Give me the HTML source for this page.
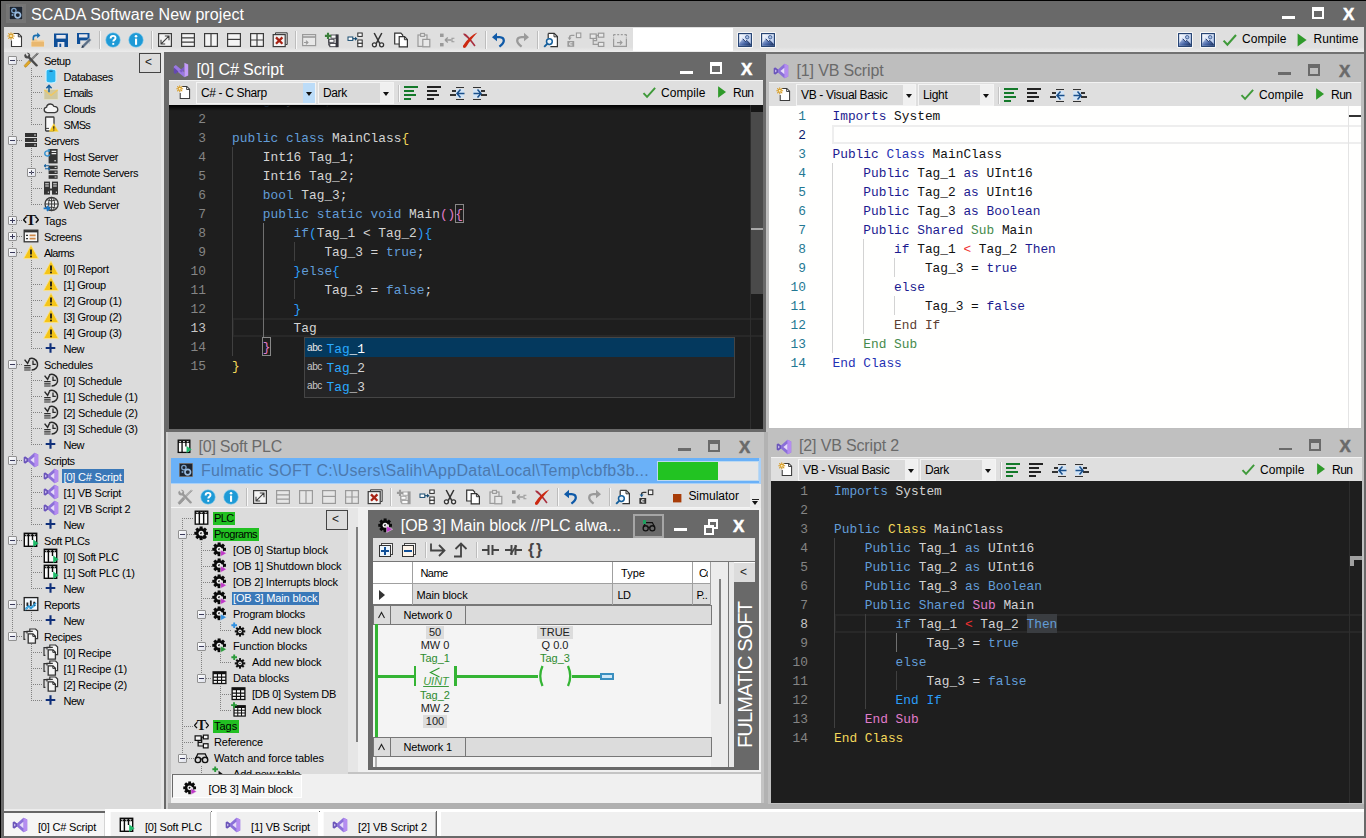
<!DOCTYPE html>
<html><head><meta charset="utf-8"><title>SCADA Software New project</title>
<style>
html,body{margin:0;padding:0}body{width:1366px;height:838px;overflow:hidden;position:relative;background:#696969;font-family:"Liberation Sans",sans-serif;}
body div,body span,body svg{position:absolute;}span{white-space:pre;}

.cd{font-family:"Liberation Mono",monospace;font-size:12.83px;line-height:19px;height:19px}
.cd b{font-weight:normal}
.dk{color:#d4d4d4}.dk .k{color:#629dd8}.dk .y{color:#f4d85a}.dk .p{color:#e07cca}.dk .b{color:#2b9df8}.dk .r{color:#f03030}.dk .hl{color:#2aaaff}.dk .w{color:#fff}
.dk.ln{color:#858585}.dk.lna{color:#c6c6c6}
.lt{color:#111}.lt .k{color:#1b1b90}.lt .y{color:#1f32b4}.lt .p{color:#468a4c}.lt .b{color:#5c3f34}.lt .r{color:#f03030}
.lt.ln{color:#237893}.lt.lna{color:#0b216f}

</style></head><body>
<svg width="0" height="0" style="left:0;top:0"><defs><linearGradient id="gsky" x1="0" y1="0" x2="1" y2="1"><stop offset="0" stop-color="#ffffff"/><stop offset="1" stop-color="#a8c0ee"/></linearGradient><linearGradient id="gmnt" x1="0" y1="0" x2="1" y2="1"><stop offset="0" stop-color="#c4d4f4"/><stop offset=".550" stop-color="#4a68a8"/><stop offset="1" stop-color="#142a58"/></linearGradient></defs></svg>
<div style="left:0px;top:0px;width:1366px;height:838px;background:#696969;"></div>
<div style="left:0px;top:0px;width:1366px;height:1px;background:#000;"></div>
<div style="left:0px;top:0px;width:1px;height:838px;background:#000;"></div>
<div style="left:6px;top:4px;width:20px;height:19px;background:#747474;"></div>
<svg style="left:9px;top:6px;" width="14" height="14" viewBox="0 0 16 16"><rect x="0" y="0" width="16" height="16" fill="#1c2430"/><rect x="0" y="0" width="16" height="16" fill="none" stroke="#8a8a8a" stroke-width="1.600"/><circle cx="5.600" cy="5.200" r="2.500" fill="none" stroke="#7aa0c8" stroke-width="1.500"/><circle cx="10" cy="10.400" r="3.200" fill="none" stroke="#9abce0" stroke-width="1.900"/><circle cx="4" cy="10.200" r="1.200" fill="#7aa0c8"/></svg>
<span style="left:31px;top:5.82px;font-size:16px;line-height:17.87px;color:#fff;letter-spacing:0.087px;">SCADA Software New project</span>
<div style="left:1282px;top:16px;width:13px;height:2.6px;background:#fff;"></div>
<div style="left:1311.5px;top:6.5px;width:8px;height:6px;border:2.5px solid #fff;border-top-width:4.5px;border-bottom-width:2px"></div>
<span style="left:1343px;top:4.92px;font-size:17px;line-height:18.99px;color:#fff;font-weight:bold;-webkit-text-stroke:.5px #fff;">X</span>
<div style="left:4px;top:27px;width:1360px;height:25px;background:#dfdfdf;"></div>
<div style="left:4px;top:47px;width:1360px;height:5px;background:linear-gradient(#dfdfdf,#ececec)"></div>
<svg style="left:7px;top:32px;" width="16" height="16" viewBox="0 0 16 16"><path d="M6.5 1.5h5l3 3v10h-10v-6" fill="#fff" stroke="#3a3a3a" stroke-width="1.1"/><path d="M11.3 1.6v3.2h3.1" fill="none" stroke="#3a3a3a" stroke-width="1"/><g stroke="#d89a1e" stroke-width="1.1" stroke-linecap="round"><path d="M4 0.8v6.4M0.8 4h6.4M1.7 1.7l4.6 4.6M6.3 1.7l-4.6 4.6"/></g><circle cx="4" cy="4" r="1.1" fill="#fff2c0"/></svg>
<svg style="left:30px;top:32px;" width="16" height="16" viewBox="0 0 16 16"><path d="M1.5 7h5l1 1.2h6.5v6.3h-12.5z" fill="#f2c98c" stroke="#f8e0b8" stroke-width=".6"/><path d="M1.5 10h12.5v4.5h-12.5z" fill="#e9b870"/><path d="M3.3 8.2v-2.2q0-2.6 2.6-2.6h2.3" fill="none" stroke="#1a6fb0" stroke-width="1.6"/><path d="M7.2 0.6l3.2 2.8-3.2 2.8z" fill="#1a6fb0"/></svg>
<svg style="left:53px;top:32px;" width="16" height="16" viewBox="0 0 16 16"><path d="M1 1.5h14v13.5h-14z" fill="#0f4f98"/><rect x="3.3" y="3" width="9.4" height="3.6" fill="#e8e8ee"/><rect x="4.6" y="10" width="6.8" height="5" fill="#e8e8ee"/><rect x="6.4" y="11.6" width="1.8" height="3.4" fill="#0f4f98"/></svg>
<svg style="left:76px;top:32px;" width="16" height="16" viewBox="0 0 16 16"><path d="M1 1h12.5v11h-12.5z" fill="#0f4f98"/><rect x="3" y="2.3" width="8.5" height="3.2" fill="#e8e8ee"/><rect x="4.2" y="8.4" width="9.5" height="4" fill="#e1e1e1"/><path d="M6.2 13.2l7.2-7.2 2 2-7.2 7.2-2.8.8z" fill="#5a6e86" stroke="#e1e1e1" stroke-width=".5"/><path d="M6.2 13.2l2 2-2.8.8z" fill="#26384e"/></svg>
<div style="left:99px;top:31px;width:1px;height:18px;background:#bdbdbd;"></div>
<div style="left:100px;top:31px;width:1px;height:18px;background:#f8f8f8;"></div>
<svg style="left:105px;top:32px;" width="16" height="16" viewBox="0 0 16 16"><circle cx="8" cy="8" r="7.3" fill="#1e9ad6" stroke="#8fd0f0" stroke-width=".6"/><path d="M5.6 6.4q0-2.5 2.5-2.5 2.4 0 2.4 2.1 0 1.2-1.2 1.9-1 .6-1 1.7" fill="none" stroke="#fff" stroke-width="1.9"/><rect x="7.3" y="10.9" width="1.9" height="1.9" fill="#fff"/></svg>
<svg style="left:128px;top:32px;" width="16" height="16" viewBox="0 0 16 16"><circle cx="8" cy="8" r="7.3" fill="#1e9ad6" stroke="#8fd0f0" stroke-width=".6"/><rect x="7" y="6.6" width="2.1" height="6.2" fill="#fff"/><circle cx="8.05" cy="4.3" r="1.3" fill="#fff"/></svg>
<div style="left:151px;top:31px;width:1px;height:18px;background:#bdbdbd;"></div>
<div style="left:152px;top:31px;width:1px;height:18px;background:#f8f8f8;"></div>
<svg style="left:157px;top:32px;" width="16" height="16" viewBox="0 0 16 16"><rect x="1.6" y="1.6" width="12.8" height="12.8" fill="#f4f4f4" stroke="#3c3c3c" stroke-width="1.2"/><path d="M4.2 11.8l7.6-7.6M7.8 4h4.2v4.2M8.2 12h-4.2v-4.2" fill="none" stroke="#3c3c3c" stroke-width="1.1"/></svg>
<svg style="left:180px;top:32px;" width="16" height="16" viewBox="0 0 16 16"><rect x="1.6" y="1.6" width="12.8" height="12.8" fill="#f4f4f4" stroke="#3c3c3c" stroke-width="1.2"/><path d="M1.6 5.9h12.8M1.6 10.1h12.8" stroke="#3c3c3c" stroke-width="1.2"/></svg>
<svg style="left:203px;top:32px;" width="16" height="16" viewBox="0 0 16 16"><rect x="1.6" y="1.6" width="12.8" height="12.8" fill="#f4f4f4" stroke="#3c3c3c" stroke-width="1.2"/><path d="M8 1.6v12.8" stroke="#3c3c3c" stroke-width="1.2"/></svg>
<svg style="left:226px;top:32px;" width="16" height="16" viewBox="0 0 16 16"><rect x="1.6" y="1.6" width="12.8" height="12.8" fill="#f4f4f4" stroke="#3c3c3c" stroke-width="1.2"/><path d="M1.6 7.4h12.8" stroke="#3c3c3c" stroke-width="1.2"/></svg>
<svg style="left:249px;top:32px;" width="16" height="16" viewBox="0 0 16 16"><rect x="1.6" y="1.6" width="12.8" height="12.8" fill="#f4f4f4" stroke="#3c3c3c" stroke-width="1.2"/><path d="M8 1.6v12.8M1.6 8h12.8" stroke="#3c3c3c" stroke-width="1.2"/></svg>
<svg style="left:272px;top:32px;" width="16" height="16" viewBox="0 0 16 16"><path d="M3.5 2.5v-1.7h11.7v11.7h-1.7" fill="none" stroke="#3c3c3c" stroke-width="1"/><rect x="1.2" y="2.6" width="12" height="12" fill="#f4f4f4" stroke="#3c3c3c" stroke-width="1.2"/><path d="M4 5.4l6.4 6.4M10.4 5.4l-6.4 6.4" stroke="#a82214" stroke-width="2.3"/></svg>
<div style="left:295px;top:31px;width:1px;height:18px;background:#bdbdbd;"></div>
<div style="left:296px;top:31px;width:1px;height:18px;background:#f8f8f8;"></div>
<svg style="left:301px;top:32px;" width="16" height="16" viewBox="0 0 16 16"><rect x="1.6" y="2.6" width="13" height="11" fill="#e8e8e8" stroke="#9a9a9a" stroke-width="1.2"/><path d="M1.6 5h13" stroke="#9a9a9a" stroke-width="1.6"/><path d="M3 10.5h3.4M5 8.6l1.9 1.9-1.9 1.9" fill="none" stroke="#9a9a9a" stroke-width="1.2"/></svg>
<svg style="left:324px;top:32px;" width="16" height="16" viewBox="0 0 16 16"><rect x="11.800" y="2.400" width="2.800" height="12.800" fill="#34343c"/><rect x="7" y="3" width="5" height="3.200" fill="#fafafa" stroke="#34343c" stroke-width=".800"/><rect x="4.800" y="7.300" width="5.200" height="3" fill="#fafafa" stroke="#34343c" stroke-width=".800"/><rect x="5.800" y="11.400" width="6.200" height="3.300" fill="#fafafa" stroke="#34343c" stroke-width=".900"/><path d="M4.800 7.300v6h1" fill="none" stroke="#34343c" stroke-width="1"/><path d="M4 .800v6.200M.900 3.900h6.200" stroke="#3a7f3a" stroke-width="2.100"/></svg>
<svg style="left:347px;top:32px;" width="16" height="16" viewBox="0 0 16 16"><rect x="1" y="5" width="4.800" height="3.400" fill="#fff" stroke="#14496e" stroke-width="1"/><path d="M5.800 6.700h3" stroke="#14496e" stroke-width="1.200"/><path d="M8 4.700l2.600 2-2.600 2z" fill="#14496e"/><rect x="10.800" y="1" width="4.400" height="3.400" fill="#fff" stroke="#2a2a2a" stroke-width="1"/><rect x="10.800" y="8" width="4.400" height="3.300" fill="#fff" stroke="#2a2a2a" stroke-width="1"/><rect x="10.800" y="11.300" width="4.400" height="3.400" fill="#fff" stroke="#2a2a2a" stroke-width="1"/></svg>
<svg style="left:370px;top:32px;" width="16" height="16" viewBox="0 0 16 16"><path d="M4.2 1l5.6 10.6M11.8 1l-5.6 10.6" stroke="#333" stroke-width="1.5" fill="none"/><circle cx="4.4" cy="12.8" r="2" fill="#f4f4f4" stroke="#333" stroke-width="1.3"/><circle cx="11.6" cy="12.8" r="2" fill="#f4f4f4" stroke="#333" stroke-width="1.3"/></svg>
<svg style="left:393px;top:32px;" width="16" height="16" viewBox="0 0 16 16"><path d="M1.7 1.2h6.2l1.8 1.8v9h-8z" fill="#fff" stroke="#333" stroke-width="1.2"/><path d="M6.2 4.7h5.4l2.8 2.8v7.3h-8.2z" fill="#fff" stroke="#333" stroke-width="1.2"/><path d="M11.4 4.9v2.8h2.8" fill="none" stroke="#333" stroke-width="1"/></svg>
<svg style="left:416px;top:32px;" width="16" height="16" viewBox="0 0 16 16"><rect x="2" y="3" width="9" height="11.4" fill="#e4e4e4" stroke="#9a9a9a" stroke-width="1.2"/><rect x="4.6" y="1.4" width="3.8" height="3" fill="#e4e4e4" stroke="#9a9a9a" stroke-width="1.1"/><rect x="6.8" y="7.4" width="7" height="7.4" fill="#e8e8e8" stroke="#9a9a9a" stroke-width="1.2"/></svg>
<svg style="left:439px;top:32px;" width="16" height="16" viewBox="0 0 16 16"><rect x="1" y="1.6" width="3.6" height="3.4" fill="#9a9a9a"/><rect x="1" y="11" width="3.6" height="3.4" fill="#9a9a9a"/><path d="M6 8h6.4M6 8l2.8-2.6M6 8l2.8 2.6" stroke="#9a9a9a" stroke-width="1.4" fill="none"/><path d="M15.4 6.2h-2.4v3.6h2.4" stroke="#9a9a9a" stroke-width="1.1" fill="none"/></svg>
<svg style="left:462px;top:32px;" width="16" height="16" viewBox="0 0 16 16"><path d="M1 1.800q1.400-.800 2.800.200 4.200 3.600 9.800 11.600l-1.300.900q-4.600-6.600-8.500-9.800-1.600-.900-2.800-2.900z" fill="#a83040"/><path d="M15.400.400q-3.400 1.400-7 4.600-5 4.400-7.400 8.800-.600 2 1.200 2.200 1.600-.200 2.400-1.800 2-3.600 4.800-6.800 3-3.800 6-7z" fill="#cc2810"/></svg>
<div style="left:485px;top:31px;width:1px;height:18px;background:#bdbdbd;"></div>
<div style="left:486px;top:31px;width:1px;height:18px;background:#f8f8f8;"></div>
<svg style="left:491px;top:32px;" width="16" height="16" viewBox="0 0 16 16"><path d="M4 5.2h4.6q4.2.2 4.2 3.6 0 2.6-4.4 5.8" fill="none" stroke="#0f5aa8" stroke-width="2.3"/><path d="M1 5.2l5-4.4v8.4z" fill="#0f5aa8"/></svg>
<svg style="left:514px;top:32px;" width="16" height="16" viewBox="0 0 16 16"><path d="M12 5.2h-4.6q-4.2.2-4.2 3.6 0 2.6 4.4 5.8" fill="none" stroke="#9a9a9a" stroke-width="2.3"/><path d="M15 5.2l-5-4.4v8.4z" fill="#9a9a9a"/></svg>
<div style="left:537px;top:31px;width:1px;height:18px;background:#bdbdbd;"></div>
<div style="left:538px;top:31px;width:1px;height:18px;background:#f8f8f8;"></div>
<svg style="left:543px;top:32px;" width="16" height="16" viewBox="0 0 16 16"><path d="M5.2 1.4h6l3.2 3.2v10h-7" fill="#fff" stroke="#333" stroke-width="1.2"/><path d="M11 1.6v3.2h3.2" fill="none" stroke="#333" stroke-width="1"/><path d="M5.2 1.4v5" stroke="#333" stroke-width="1.2"/><circle cx="6.4" cy="9.6" r="2.9" fill="#e8f2fa" stroke="#155f9c" stroke-width="1.5"/><path d="M4.2 11.8l-3 3" stroke="#155f9c" stroke-width="1.9"/></svg>
<svg style="left:566px;top:32px;" width="16" height="16" viewBox="0 0 16 16"><rect x="10.4" y="1" width="4.4" height="4.6" fill="#e8e8e8" stroke="#9a9a9a" stroke-width="1.1"/><rect x="1.4" y="9" width="6.8" height="5.8" fill="#9a9a9a"/><path d="M6.4 10.8h-2.6v2.2h2.6" fill="none" stroke="#e8e8e8" stroke-width="1"/><path d="M3.6 7.6v-2.4q0-1.8 2-1.8h2.8" fill="none" stroke="#9a9a9a" stroke-width="1.3"/><path d="M1.6 5.4l2 2.6 2-2.6z" fill="#9a9a9a"/></svg>
<svg style="left:589px;top:32px;" width="16" height="16" viewBox="0 0 16 16"><rect x="1.2" y="2" width="6" height="4.4" fill="#e8e8e8" stroke="#9a9a9a" stroke-width="1.2"/><rect x="9.4" y="1.2" width="5.4" height="4" fill="#e8e8e8" stroke="#9a9a9a" stroke-width="1.2"/><rect x="9.4" y="10.4" width="5.4" height="4" fill="#e8e8e8" stroke="#9a9a9a" stroke-width="1.2"/><path d="M4.2 6.4v6h5.2M4.2 8.6h3.4v-5.2h1.8" fill="none" stroke="#9a9a9a" stroke-width="1.2"/></svg>
<svg style="left:612px;top:32px;" width="16" height="16" viewBox="0 0 16 16"><path d="M1.6 7v7.4h12.8v-7.4" fill="none" stroke="#9a9a9a" stroke-width="1.2"/><path d="M1.6 2.6h12.8" stroke="#9a9a9a" stroke-width="1.2" stroke-dasharray="2 1.6"/><path d="M1.6 2.6v4M14.4 2.6v4" stroke="#9a9a9a" stroke-width="1.2" stroke-dasharray="1.6 1.4"/><path d="M5 10.6h4.6M8 8.6l2 2-2 2" fill="none" stroke="#9a9a9a" stroke-width="1.1"/></svg>
<div style="left:633px;top:28px;width:100px;height:23px;background:#fff;"></div>
<svg style="left:737px;top:32px;" width="16" height="16" viewBox="0 0 16 16"><rect x=".300" y=".300" width="15.400" height="15.400" fill="#fff"/><rect x="1.600" y="1.600" width="12.800" height="12.800" fill="url(#gsky)" stroke="#1f3d6e" stroke-width="1.100"/><path d="M2.200 13.800v-2.600l3.600-4.400 2.600 2.800 1.400-1.200 4 4.200v1.200z" fill="url(#gmnt)"/><path d="M5.800 6.800l2.600 2.800 1.400-1.200 4 4.200" fill="none" stroke="#1a2f5a" stroke-width=".900"/><circle cx="10.200" cy="5.200" r="1.700" fill="#a9c0e8" stroke="#3d5c8e" stroke-width=".900"/></svg>
<svg style="left:760px;top:32px;" width="16" height="16" viewBox="0 0 16 16"><rect x=".300" y=".300" width="15.400" height="15.400" fill="#fff"/><rect x="1.600" y="1.600" width="12.800" height="12.800" fill="url(#gsky)" stroke="#1f3d6e" stroke-width="1.100"/><path d="M2.200 13.800v-2.600l3.600-4.400 2.600 2.800 1.400-1.200 4 4.200v1.200z" fill="url(#gmnt)"/><path d="M5.800 6.800l2.600 2.800 1.400-1.200 4 4.200" fill="none" stroke="#1a2f5a" stroke-width=".900"/><circle cx="10.200" cy="5.200" r="1.700" fill="#a9c0e8" stroke="#3d5c8e" stroke-width=".900"/></svg>
<svg style="left:1177px;top:32px;" width="16" height="16" viewBox="0 0 16 16"><rect x=".300" y=".300" width="15.400" height="15.400" fill="#fff"/><rect x="1.600" y="1.600" width="12.800" height="12.800" fill="url(#gsky)" stroke="#1f3d6e" stroke-width="1.100"/><path d="M2.200 13.800v-2.600l3.600-4.400 2.600 2.800 1.400-1.200 4 4.200v1.200z" fill="url(#gmnt)"/><path d="M5.800 6.800l2.600 2.800 1.400-1.200 4 4.200" fill="none" stroke="#1a2f5a" stroke-width=".900"/><circle cx="10.200" cy="5.200" r="1.700" fill="#a9c0e8" stroke="#3d5c8e" stroke-width=".900"/></svg>
<svg style="left:1200px;top:32px;" width="16" height="16" viewBox="0 0 16 16"><rect x=".300" y=".300" width="15.400" height="15.400" fill="#fff"/><rect x="1.600" y="1.600" width="12.800" height="12.800" fill="url(#gsky)" stroke="#1f3d6e" stroke-width="1.100"/><path d="M2.200 13.800v-2.600l3.600-4.400 2.600 2.800 1.400-1.200 4 4.200v1.200z" fill="url(#gmnt)"/><path d="M5.800 6.800l2.600 2.800 1.400-1.200 4 4.200" fill="none" stroke="#1a2f5a" stroke-width=".900"/><circle cx="10.200" cy="5.200" r="1.700" fill="#a9c0e8" stroke="#3d5c8e" stroke-width=".900"/></svg>
<svg style="left:1222px;top:32px;" width="16" height="16" viewBox="0 0 16 16"><path d="M1.6 8.6l3.8 4 8.6-9.6" fill="none" stroke="#3f9a3a" stroke-width="2.1"/></svg>
<span style="left:1242px;top:33.14px;font-size:12px;line-height:13.40px;color:#000;letter-spacing:0.069px;">Compile</span>
<svg style="left:1294px;top:32px;" width="16" height="16" viewBox="0 0 16 16"><path d="M3.6 1.4l9 6.6-9 6.6z" fill="#2f9a2a"/></svg>
<span style="left:1313.5px;top:33.14px;font-size:12px;line-height:13.40px;color:#000;letter-spacing:0.045px;">Runtime</span>
<div style="left:4px;top:52px;width:157px;height:757px;background:#dcdcdc;"></div>
<div style="left:161px;top:52px;width:3px;height:757px;background:#e6e6e6;"></div>
<div style="left:139px;top:53px;width:20px;height:18px;border:1px solid #444;background:#dcdcdc"></div>
<span style="left:145px;top:56.14px;font-size:12px;line-height:13.40px;color:#222;">&lt;</span>
<div style="left:12px;top:60px;width:1px;height:576px;background:repeating-linear-gradient(180deg,#808080 0 1px,transparent 1px 2px)"></div>
<div style="left:17px;top:60px;width:6px;height:1px;background:repeating-linear-gradient(90deg,#808080 0 1px,transparent 1px 2px)"></div>
<div style="left:8px;top:56px;width:7px;height:7px;border:1px solid #919191;background:linear-gradient(135deg,#fff,#dde0ea);border-radius:1px"></div>
<div style="left:10px;top:60px;width:5px;height:1px;background:#3a3a5a;"></div>
<svg style="left:23px;top:52px;" width="16" height="16" viewBox="0 0 16 16"><path d="M13.8 1.2l1 1-7.6 8-1.4-1.4z" fill="#8a8a8a" stroke="#555" stroke-width=".5"/><path d="M14.6 .8l.6.6-2 2.2" stroke="#555" stroke-width=".8" fill="none"/><path d="M1.2 13.4l4.6-4.8 1.8 1.8-4.6 4.8q-1.4.4-1.8-1.8z" fill="#e0a828" stroke="#a87818" stroke-width=".5"/><path d="M2.2 1.4q-1.8 1.8-.4 4 1.600 1.400 3.200.8l8 8.200q1.400.6 2-1.200l-8-8.400q.8-2-.8-3.600-1.200-.8-2.400-.4l2 2-1.600 1.800z" fill="#4a4a4a"/></svg>
<span style="left:44px;top:54.84px;font-size:11px;line-height:12.29px;color:#000;letter-spacing:-0.470px;">Setup</span>
<div style="left:31px;top:76px;width:12px;height:1px;background:repeating-linear-gradient(90deg,#808080 0 1px,transparent 1px 2px)"></div>
<svg style="left:42.5px;top:68px;" width="16" height="16" viewBox="0 0 16 16"><path d="M3 3.200q0-2.200 5-2.200t5 2.200v9.600q0 2.200-5 2.200t-5-2.200z" fill="#2bb5f0" stroke="#c8f0ff" stroke-width="1.200"/><path d="M6.400 3.200h3.200" stroke="#0f5a8a" stroke-width="1.200"/></svg>
<span style="left:63.6px;top:70.84px;font-size:11px;line-height:12.29px;color:#000;letter-spacing:-0.355px;">Databases</span>
<div style="left:31px;top:92px;width:12px;height:1px;background:repeating-linear-gradient(90deg,#808080 0 1px,transparent 1px 2px)"></div>
<svg style="left:42.5px;top:84px;" width="16" height="16" viewBox="0 0 16 16"><rect x="1" y="5.400" width="14" height="10" fill="#cfc8a0" stroke="#e8e4c8" stroke-width=".6"/><path d="M1.400 6l6.600 5.400 6.600-5.400" fill="none" stroke="#f0c860" stroke-width="1.400"/><path d="M6 8.200v-6.400M3.400 4.200l2.600-2.800 2.600 2.800" fill="none" stroke="#155f9c" stroke-width="1.500"/></svg>
<span style="left:63.6px;top:86.84px;font-size:11px;line-height:12.29px;color:#000;letter-spacing:-0.736px;">Emails</span>
<div style="left:31px;top:108px;width:12px;height:1px;background:repeating-linear-gradient(90deg,#808080 0 1px,transparent 1px 2px)"></div>
<svg style="left:42.5px;top:100px;" width="16" height="16" viewBox="0 0 16 16"><path d="M4.200 12.600q-3-.2-3-2.800 0-2.200 2.400-2.600.4-3.200 3.800-3.200 2.600 0 3.600 2.400 3.800 0 3.800 3.200 0 2.800-3 3z" fill="#f4f4f4" stroke="#3a3a3a" stroke-width="1.300"/></svg>
<span style="left:63.6px;top:102.84px;font-size:11px;line-height:12.29px;color:#000;letter-spacing:-0.408px;">Clouds</span>
<div style="left:31px;top:124px;width:12px;height:1px;background:repeating-linear-gradient(90deg,#808080 0 1px,transparent 1px 2px)"></div>
<svg style="left:42.5px;top:116px;" width="16" height="16" viewBox="0 0 16 16"><rect x="2.600" y="1" width="8.400" height="14" rx=".8" fill="#f8f8f8" stroke="#3a3a3a" stroke-width="1.300"/><path d="M3 12.400h3" stroke="#3a3a3a" stroke-width="1"/><path d="M10.800 7.600l4.600 7.800h-9.200z" fill="#f5c518" stroke="#fbe27a" stroke-width=".5"/><path d="M10.800 10.200v2.600M10.800 13.600v1" stroke="#222" stroke-width="1.200"/></svg>
<span style="left:63.6px;top:118.85px;font-size:11px;line-height:12.29px;color:#000;letter-spacing:-0.686px;">SMSs</span>
<div style="left:17px;top:140px;width:6px;height:1px;background:repeating-linear-gradient(90deg,#808080 0 1px,transparent 1px 2px)"></div>
<div style="left:8px;top:136px;width:7px;height:7px;border:1px solid #919191;background:linear-gradient(135deg,#fff,#dde0ea);border-radius:1px"></div>
<div style="left:10px;top:140px;width:5px;height:1px;background:#3a3a5a;"></div>
<svg style="left:23px;top:132px;" width="16" height="16" viewBox="0 0 16 16"><rect x="2" y="1" width="12" height="4" fill="#333"/><rect x="2" y="6" width="12" height="4" fill="#333"/><rect x="2" y="11" width="12" height="4" fill="#333"/><path d="M11 3h2M11 8h2M11 13h2" stroke="#ddd" stroke-width="1"/></svg>
<span style="left:44px;top:134.84px;font-size:11px;line-height:12.29px;color:#000;letter-spacing:-0.444px;">Servers</span>
<div style="left:31px;top:156px;width:12px;height:1px;background:repeating-linear-gradient(90deg,#808080 0 1px,transparent 1px 2px)"></div>
<svg style="left:42.5px;top:148px;" width="16" height="16" viewBox="0 0 16 16"><rect x="5.600" y="1" width="9" height="14.400" fill="#333"/><path d="M8.600 3.400h4.600M8.600 5.600h4.600" stroke="#eee" stroke-width="1.100"/><rect x="11.400" y="12" width="1.400" height="1.400" fill="#ddd"/><path d="M6.200 3.600a2.600 2.600 0 1 0 .6 2.800" fill="none" stroke="#2f8fd0" stroke-width="1.400"/><path d="M4.400 1.400l2.600-.2-.4 2.800z" fill="#2f8fd0"/></svg>
<span style="left:63.6px;top:150.84px;font-size:11px;line-height:12.29px;color:#000;letter-spacing:-0.325px;">Host Server</span>
<div style="left:31px;top:172px;width:12px;height:1px;background:repeating-linear-gradient(90deg,#808080 0 1px,transparent 1px 2px)"></div>
<div style="left:27px;top:168px;width:7px;height:7px;border:1px solid #919191;background:linear-gradient(135deg,#fff,#dde0ea);border-radius:1px"></div>
<div style="left:29px;top:172px;width:5px;height:1px;background:#3a3a5a;"></div>
<div style="left:31px;top:170px;width:1px;height:5px;background:#3a3a5a;"></div>
<svg style="left:42.5px;top:164px;" width="16" height="16" viewBox="0 0 16 16"><rect x="5.600" y="1.600" width="9" height="3.600" fill="#333"/><rect x="5.600" y="6.400" width="9" height="3.600" fill="#333"/><rect x="5.600" y="11.200" width="9" height="3.600" fill="#333"/><path d="M11.600 3.400h2M11.600 8.200h2M11.600 13h2" stroke="#ddd" stroke-width="1"/><path d="M1.200 1.800h5M1.200 1.800l1.600-1.400M1.200 1.800l1.600 1.400M7 4.800h-5M7 4.800l-1.600-1.400M7 4.800l-1.600 1.400" stroke="#155f9c" stroke-width="1.100" fill="none"/></svg>
<span style="left:63.6px;top:166.84px;font-size:11px;line-height:12.29px;color:#000;letter-spacing:-0.356px;">Remote Servers</span>
<div style="left:31px;top:188px;width:12px;height:1px;background:repeating-linear-gradient(90deg,#808080 0 1px,transparent 1px 2px)"></div>
<svg style="left:42.5px;top:180px;" width="16" height="16" viewBox="0 0 16 16"><rect x="1" y="1.600" width="6" height="13" fill="#333"/><rect x="9" y="1.600" width="6" height="13" fill="#333"/><path d="M2.200 3.800h3.600M2.200 6h3.600M10.200 3.800h3.600M10.200 6h3.600" stroke="#eee" stroke-width="1"/><path d="M7 9.400h2" stroke="#333" stroke-width="2"/><rect x="4.800" y="11.600" width="1.200" height="1.200" fill="#ddd"/><rect x="12.800" y="11.600" width="1.200" height="1.200" fill="#ddd"/></svg>
<span style="left:63.6px;top:182.84px;font-size:11px;line-height:12.29px;color:#000;letter-spacing:-0.270px;">Redundant</span>
<div style="left:31px;top:204px;width:12px;height:1px;background:repeating-linear-gradient(90deg,#808080 0 1px,transparent 1px 2px)"></div>
<svg style="left:42.5px;top:196px;" width="16" height="16" viewBox="0 0 16 16"><circle cx="8.600" cy="8" r="6.600" fill="#f0f0f0" stroke="#3a3a3a" stroke-width="1.300"/><path d="M8.600 1.400v13.200M2 8h13.200M4 3.800q4.600 2.400 9.200 0M4 12.200q4.600-2.400 9.200 0" fill="none" stroke="#3a3a3a" stroke-width="1"/><ellipse cx="8.600" cy="8" rx="3" ry="6.600" fill="none" stroke="#3a3a3a" stroke-width="1"/><path d="M0.600 12.400h5.400M4 10l2.400 2.400-2.400 2.400" fill="none" stroke="#1a78c8" stroke-width="1.700"/></svg>
<span style="left:63.6px;top:198.84px;font-size:11px;line-height:12.29px;color:#000;letter-spacing:-0.188px;">Web Server</span>
<div style="left:17px;top:220px;width:6px;height:1px;background:repeating-linear-gradient(90deg,#808080 0 1px,transparent 1px 2px)"></div>
<div style="left:8px;top:216px;width:7px;height:7px;border:1px solid #919191;background:linear-gradient(135deg,#fff,#dde0ea);border-radius:1px"></div>
<div style="left:10px;top:220px;width:5px;height:1px;background:#3a3a5a;"></div>
<div style="left:12px;top:218px;width:1px;height:5px;background:#3a3a5a;"></div>
<svg style="left:23px;top:212px;" width="16" height="16" viewBox="0 0 16 16"><text x="8" y="13" font-family="Liberation Serif" font-weight="bold" font-size="15" text-anchor="middle" fill="#111">T</text><path d="M3.200 4.800l-2.600 3 2.600 3M12.800 4.800l2.600 3-2.600 3" fill="none" stroke="#111" stroke-width="1.400"/></svg>
<span style="left:44px;top:214.84px;font-size:11px;line-height:12.29px;color:#000;letter-spacing:-0.162px;">Tags</span>
<div style="left:17px;top:236px;width:6px;height:1px;background:repeating-linear-gradient(90deg,#808080 0 1px,transparent 1px 2px)"></div>
<div style="left:8px;top:232px;width:7px;height:7px;border:1px solid #919191;background:linear-gradient(135deg,#fff,#dde0ea);border-radius:1px"></div>
<div style="left:10px;top:236px;width:5px;height:1px;background:#3a3a5a;"></div>
<div style="left:12px;top:234px;width:1px;height:5px;background:#3a3a5a;"></div>
<svg style="left:23px;top:228px;" width="16" height="16" viewBox="0 0 16 16"><rect x="1.200" y="2.200" width="13.600" height="11.600" fill="#f8f8f8" stroke="#333" stroke-width="1.300"/><path d="M1.200 3.400h13.600" stroke="#333" stroke-width="2"/><path d="M3 7.400h2M3 10.600h2" stroke="#333" stroke-width="1.200"/><path d="M6.600 7.400h6M6.600 10.600h6" stroke="#d08a4a" stroke-width="1.800"/></svg>
<span style="left:44px;top:230.84px;font-size:11px;line-height:12.29px;color:#000;letter-spacing:-0.394px;">Screens</span>
<div style="left:17px;top:252px;width:6px;height:1px;background:repeating-linear-gradient(90deg,#808080 0 1px,transparent 1px 2px)"></div>
<div style="left:8px;top:248px;width:7px;height:7px;border:1px solid #919191;background:linear-gradient(135deg,#fff,#dde0ea);border-radius:1px"></div>
<div style="left:10px;top:252px;width:5px;height:1px;background:#3a3a5a;"></div>
<svg style="left:23px;top:244px;" width="16" height="16" viewBox="0 0 16 16"><path d="M8 1l7.400 13.600h-14.800z" fill="#f5c518" stroke="#fbe590" stroke-width=".8" stroke-linejoin="round"/><path d="M8 5.400v5.200" stroke="#1a1a1a" stroke-width="1.800"/><rect x="7.100" y="11.600" width="1.800" height="1.700" fill="#1a1a1a"/></svg>
<span style="left:44px;top:246.84px;font-size:11px;line-height:12.29px;color:#000;letter-spacing:-0.739px;">Alarms</span>
<div style="left:31px;top:268px;width:12px;height:1px;background:repeating-linear-gradient(90deg,#808080 0 1px,transparent 1px 2px)"></div>
<svg style="left:42.5px;top:260px;" width="16" height="16" viewBox="0 0 16 16"><path d="M8 1l7.400 13.600h-14.800z" fill="#f5c518" stroke="#fbe590" stroke-width=".8" stroke-linejoin="round"/><path d="M8 5.400v5.200" stroke="#1a1a1a" stroke-width="1.800"/><rect x="7.100" y="11.600" width="1.800" height="1.700" fill="#1a1a1a"/></svg>
<span style="left:63.6px;top:262.85px;font-size:11px;line-height:12.29px;color:#000;letter-spacing:-0.321px;">[0] Report</span>
<div style="left:31px;top:284px;width:12px;height:1px;background:repeating-linear-gradient(90deg,#808080 0 1px,transparent 1px 2px)"></div>
<svg style="left:42.5px;top:276px;" width="16" height="16" viewBox="0 0 16 16"><path d="M8 1l7.400 13.600h-14.800z" fill="#f5c518" stroke="#fbe590" stroke-width=".8" stroke-linejoin="round"/><path d="M8 5.400v5.200" stroke="#1a1a1a" stroke-width="1.800"/><rect x="7.100" y="11.600" width="1.800" height="1.700" fill="#1a1a1a"/></svg>
<span style="left:63.6px;top:278.85px;font-size:11px;line-height:12.29px;color:#000;letter-spacing:-0.418px;">[1] Group</span>
<div style="left:31px;top:300px;width:12px;height:1px;background:repeating-linear-gradient(90deg,#808080 0 1px,transparent 1px 2px)"></div>
<svg style="left:42.5px;top:292px;" width="16" height="16" viewBox="0 0 16 16"><path d="M8 1l7.400 13.600h-14.800z" fill="#f5c518" stroke="#fbe590" stroke-width=".8" stroke-linejoin="round"/><path d="M8 5.400v5.200" stroke="#1a1a1a" stroke-width="1.800"/><rect x="7.100" y="11.600" width="1.800" height="1.700" fill="#1a1a1a"/></svg>
<span style="left:63.6px;top:294.85px;font-size:11px;line-height:12.29px;color:#000;letter-spacing:-0.343px;">[2] Group (1)</span>
<div style="left:31px;top:316px;width:12px;height:1px;background:repeating-linear-gradient(90deg,#808080 0 1px,transparent 1px 2px)"></div>
<svg style="left:42.5px;top:308px;" width="16" height="16" viewBox="0 0 16 16"><path d="M8 1l7.400 13.600h-14.800z" fill="#f5c518" stroke="#fbe590" stroke-width=".8" stroke-linejoin="round"/><path d="M8 5.400v5.200" stroke="#1a1a1a" stroke-width="1.800"/><rect x="7.100" y="11.600" width="1.800" height="1.700" fill="#1a1a1a"/></svg>
<span style="left:63.6px;top:310.85px;font-size:11px;line-height:12.29px;color:#000;letter-spacing:-0.343px;">[3] Group (2)</span>
<div style="left:31px;top:332px;width:12px;height:1px;background:repeating-linear-gradient(90deg,#808080 0 1px,transparent 1px 2px)"></div>
<svg style="left:42.5px;top:324px;" width="16" height="16" viewBox="0 0 16 16"><path d="M8 1l7.400 13.600h-14.800z" fill="#f5c518" stroke="#fbe590" stroke-width=".8" stroke-linejoin="round"/><path d="M8 5.400v5.200" stroke="#1a1a1a" stroke-width="1.800"/><rect x="7.100" y="11.600" width="1.800" height="1.700" fill="#1a1a1a"/></svg>
<span style="left:63.6px;top:326.85px;font-size:11px;line-height:12.29px;color:#000;letter-spacing:-0.343px;">[4] Group (3)</span>
<div style="left:31px;top:348px;width:12px;height:1px;background:repeating-linear-gradient(90deg,#808080 0 1px,transparent 1px 2px)"></div>
<svg style="left:42.5px;top:340px;" width="16" height="16" viewBox="0 0 16 16"><path d="M7.500 3.200v9.600M2.700 8h9.600" stroke="#0f2f7a" stroke-width="2.100"/></svg>
<span style="left:63.6px;top:342.85px;font-size:11px;line-height:12.29px;color:#000;letter-spacing:-0.639px;">New</span>
<div style="left:17px;top:364px;width:6px;height:1px;background:repeating-linear-gradient(90deg,#808080 0 1px,transparent 1px 2px)"></div>
<div style="left:8px;top:360px;width:7px;height:7px;border:1px solid #919191;background:linear-gradient(135deg,#fff,#dde0ea);border-radius:1px"></div>
<div style="left:10px;top:364px;width:5px;height:1px;background:#3a3a5a;"></div>
<svg style="left:23px;top:356px;" width="16" height="16" viewBox="0 0 16 16"><path d="M6.200 3a5.800 5.800 0 1 1 2.400 11" fill="none" stroke="#2a2a2a" stroke-width="1.500"/><path d="M10 4.600v3.800h2.800" fill="none" stroke="#2a2a2a" stroke-width="1.300"/><path d="M1.600 3.600l3 3.800 2-4.200" fill="none" stroke="#2a2a2a" stroke-width="1.500"/><path d="M1.200 9.600h6.400M1.200 11.800h6.400M1.200 14h6.400" stroke="#2a2a2a" stroke-width="1.200"/></svg>
<span style="left:44px;top:358.85px;font-size:11px;line-height:12.29px;color:#000;letter-spacing:-0.308px;">Schedules</span>
<div style="left:31px;top:380px;width:12px;height:1px;background:repeating-linear-gradient(90deg,#808080 0 1px,transparent 1px 2px)"></div>
<svg style="left:42.5px;top:372px;" width="16" height="16" viewBox="0 0 16 16"><path d="M6.200 3a5.800 5.800 0 1 1 2.400 11" fill="none" stroke="#2a2a2a" stroke-width="1.500"/><path d="M10 4.600v3.800h2.800" fill="none" stroke="#2a2a2a" stroke-width="1.300"/><path d="M1.600 3.600l3 3.800 2-4.200" fill="none" stroke="#2a2a2a" stroke-width="1.500"/><path d="M1.200 9.600h6.400M1.200 11.800h6.400M1.200 14h6.400" stroke="#2a2a2a" stroke-width="1.200"/></svg>
<span style="left:63.6px;top:374.85px;font-size:11px;line-height:12.29px;color:#000;letter-spacing:-0.230px;">[0] Schedule</span>
<div style="left:31px;top:396px;width:12px;height:1px;background:repeating-linear-gradient(90deg,#808080 0 1px,transparent 1px 2px)"></div>
<svg style="left:42.5px;top:388px;" width="16" height="16" viewBox="0 0 16 16"><path d="M6.200 3a5.800 5.800 0 1 1 2.400 11" fill="none" stroke="#2a2a2a" stroke-width="1.500"/><path d="M10 4.600v3.800h2.800" fill="none" stroke="#2a2a2a" stroke-width="1.300"/><path d="M1.600 3.600l3 3.800 2-4.200" fill="none" stroke="#2a2a2a" stroke-width="1.500"/><path d="M1.200 9.600h6.400M1.200 11.800h6.400M1.200 14h6.400" stroke="#2a2a2a" stroke-width="1.200"/></svg>
<span style="left:63.6px;top:390.85px;font-size:11px;line-height:12.29px;color:#000;letter-spacing:-0.229px;">[1] Schedule (1)</span>
<div style="left:31px;top:412px;width:12px;height:1px;background:repeating-linear-gradient(90deg,#808080 0 1px,transparent 1px 2px)"></div>
<svg style="left:42.5px;top:404px;" width="16" height="16" viewBox="0 0 16 16"><path d="M6.200 3a5.800 5.800 0 1 1 2.400 11" fill="none" stroke="#2a2a2a" stroke-width="1.500"/><path d="M10 4.600v3.800h2.800" fill="none" stroke="#2a2a2a" stroke-width="1.300"/><path d="M1.600 3.600l3 3.800 2-4.200" fill="none" stroke="#2a2a2a" stroke-width="1.500"/><path d="M1.200 9.600h6.400M1.200 11.800h6.400M1.200 14h6.400" stroke="#2a2a2a" stroke-width="1.200"/></svg>
<span style="left:63.6px;top:406.85px;font-size:11px;line-height:12.29px;color:#000;letter-spacing:-0.229px;">[2] Schedule (2)</span>
<div style="left:31px;top:428px;width:12px;height:1px;background:repeating-linear-gradient(90deg,#808080 0 1px,transparent 1px 2px)"></div>
<svg style="left:42.5px;top:420px;" width="16" height="16" viewBox="0 0 16 16"><path d="M6.200 3a5.800 5.800 0 1 1 2.400 11" fill="none" stroke="#2a2a2a" stroke-width="1.500"/><path d="M10 4.600v3.800h2.800" fill="none" stroke="#2a2a2a" stroke-width="1.300"/><path d="M1.600 3.600l3 3.800 2-4.200" fill="none" stroke="#2a2a2a" stroke-width="1.500"/><path d="M1.200 9.600h6.400M1.200 11.800h6.400M1.200 14h6.400" stroke="#2a2a2a" stroke-width="1.200"/></svg>
<span style="left:63.6px;top:422.85px;font-size:11px;line-height:12.29px;color:#000;letter-spacing:-0.229px;">[3] Schedule (3)</span>
<div style="left:31px;top:444px;width:12px;height:1px;background:repeating-linear-gradient(90deg,#808080 0 1px,transparent 1px 2px)"></div>
<svg style="left:42.5px;top:436px;" width="16" height="16" viewBox="0 0 16 16"><path d="M7.500 3.200v9.600M2.700 8h9.600" stroke="#0f2f7a" stroke-width="2.100"/></svg>
<span style="left:63.6px;top:438.85px;font-size:11px;line-height:12.29px;color:#000;letter-spacing:-0.639px;">New</span>
<div style="left:17px;top:460px;width:6px;height:1px;background:repeating-linear-gradient(90deg,#808080 0 1px,transparent 1px 2px)"></div>
<div style="left:8px;top:456px;width:7px;height:7px;border:1px solid #919191;background:linear-gradient(135deg,#fff,#dde0ea);border-radius:1px"></div>
<div style="left:10px;top:460px;width:5px;height:1px;background:#3a3a5a;"></div>
<svg style="left:23px;top:452px;" width="16" height="16" viewBox="0 0 16 16"><path d="M11.400 .8l3.800 1.600v11.200l-3.800 1.600-6.400-5.800-2.800 2.200-1.400-.8v-5.600l1.400-.8 2.800 2.200z" fill="#8a6fd8"/><path d="M11.400 .8l3.800 1.600v11.200l-3.800 1.600z" fill="#b58cf0"/><path d="M11.400 4.800v6.400l-4-3.200z" fill="#e8dcfa"/><path d="M.8 5.200l1.400-.8 2.800 2.200v2.800l-2.800 2.200-1.400-.8z" fill="#6a55b8"/><path d="M2.200 6.400v3.200l1.600-1.600z" fill="#dcd0f4"/></svg>
<span style="left:44px;top:454.85px;font-size:11px;line-height:12.29px;color:#000;letter-spacing:-0.432px;">Scripts</span>
<div style="left:31px;top:476px;width:12px;height:1px;background:repeating-linear-gradient(90deg,#808080 0 1px,transparent 1px 2px)"></div>
<svg style="left:42.5px;top:468px;" width="16" height="16" viewBox="0 0 16 16"><path d="M11.400 .8l3.800 1.600v11.200l-3.800 1.600-6.400-5.800-2.800 2.200-1.400-.8v-5.600l1.400-.8 2.800 2.200z" fill="#8a6fd8"/><path d="M11.400 .8l3.800 1.600v11.200l-3.800 1.600z" fill="#b58cf0"/><path d="M11.400 4.800v6.400l-4-3.200z" fill="#e8dcfa"/><path d="M.8 5.200l1.400-.8 2.800 2.200v2.800l-2.800 2.200-1.400-.8z" fill="#6a55b8"/><path d="M2.200 6.400v3.200l1.600-1.600z" fill="#dcd0f4"/></svg>
<div style="left:62px;top:469px;width:61.9px;height:14px;background:#3a78b8;"></div>
<span style="left:63.6px;top:470.85px;font-size:11px;line-height:12.29px;color:#fff;letter-spacing:-0.202px;">[0] C# Script</span>
<div style="left:31px;top:492px;width:12px;height:1px;background:repeating-linear-gradient(90deg,#808080 0 1px,transparent 1px 2px)"></div>
<svg style="left:42.5px;top:484px;" width="16" height="16" viewBox="0 0 16 16"><path d="M11.400 .8l3.800 1.600v11.200l-3.800 1.600-6.400-5.800-2.800 2.200-1.400-.8v-5.600l1.400-.8 2.800 2.200z" fill="#8a6fd8"/><path d="M11.400 .8l3.800 1.600v11.200l-3.800 1.600z" fill="#b58cf0"/><path d="M11.400 4.800v6.400l-4-3.200z" fill="#e8dcfa"/><path d="M.8 5.200l1.400-.8 2.800 2.200v2.800l-2.800 2.200-1.400-.8z" fill="#6a55b8"/><path d="M2.200 6.400v3.200l1.600-1.600z" fill="#dcd0f4"/></svg>
<span style="left:63.6px;top:486.85px;font-size:11px;line-height:12.29px;color:#000;letter-spacing:-0.288px;">[1] VB Script</span>
<div style="left:31px;top:508px;width:12px;height:1px;background:repeating-linear-gradient(90deg,#808080 0 1px,transparent 1px 2px)"></div>
<svg style="left:42.5px;top:500px;" width="16" height="16" viewBox="0 0 16 16"><path d="M11.400 .8l3.800 1.600v11.200l-3.800 1.600-6.400-5.800-2.800 2.200-1.400-.8v-5.600l1.400-.8 2.800 2.200z" fill="#8a6fd8"/><path d="M11.400 .8l3.800 1.600v11.200l-3.800 1.600z" fill="#b58cf0"/><path d="M11.400 4.800v6.400l-4-3.200z" fill="#e8dcfa"/><path d="M.8 5.200l1.400-.8 2.800 2.200v2.800l-2.800 2.200-1.400-.8z" fill="#6a55b8"/><path d="M2.200 6.400v3.200l1.600-1.600z" fill="#dcd0f4"/></svg>
<span style="left:63.6px;top:502.84px;font-size:11px;line-height:12.29px;color:#000;letter-spacing:-0.227px;">[2] VB Script 2</span>
<div style="left:31px;top:524px;width:12px;height:1px;background:repeating-linear-gradient(90deg,#808080 0 1px,transparent 1px 2px)"></div>
<svg style="left:42.5px;top:516px;" width="16" height="16" viewBox="0 0 16 16"><path d="M7.500 3.200v9.600M2.700 8h9.600" stroke="#0f2f7a" stroke-width="2.100"/></svg>
<span style="left:63.6px;top:518.84px;font-size:11px;line-height:12.29px;color:#000;letter-spacing:-0.639px;">New</span>
<div style="left:17px;top:540px;width:6px;height:1px;background:repeating-linear-gradient(90deg,#808080 0 1px,transparent 1px 2px)"></div>
<div style="left:8px;top:536px;width:7px;height:7px;border:1px solid #919191;background:linear-gradient(135deg,#fff,#dde0ea);border-radius:1px"></div>
<div style="left:10px;top:540px;width:5px;height:1px;background:#3a3a5a;"></div>
<svg style="left:23px;top:532px;" width="16" height="16" viewBox="0 0 16 16"><rect x="1.300" y="1.300" width="12.400" height="13" fill="#fafafa" stroke="#0a0a0a" stroke-width="1.400"/><path d="M1.300 2.600h12.400" stroke="#0a0a0a" stroke-width="3.200"/><path d="M5.400 4v10.400M9.500 4v4" stroke="#0a0a0a" stroke-width="1.400"/><path d="M2.600 2l.8 1.400.8-1.400M6.600 2l.8 1.400.8-1.400M10.600 2l.8 1.400.8-1.400" fill="none" stroke="#fafafa" stroke-width=".9"/><path d="M10.200 7.400l5.400 3.800-5.400 3.800z" fill="#1fba6a"/></svg>
<span style="left:44px;top:534.84px;font-size:11px;line-height:12.29px;color:#000;letter-spacing:-0.437px;">Soft PLCs</span>
<div style="left:31px;top:556px;width:12px;height:1px;background:repeating-linear-gradient(90deg,#808080 0 1px,transparent 1px 2px)"></div>
<svg style="left:42.5px;top:548px;" width="16" height="16" viewBox="0 0 16 16"><rect x="1.300" y="1.300" width="12.400" height="13" fill="#fafafa" stroke="#0a0a0a" stroke-width="1.400"/><path d="M1.300 2.600h12.400" stroke="#0a0a0a" stroke-width="3.200"/><path d="M5.400 4v10.400M9.500 4v4" stroke="#0a0a0a" stroke-width="1.400"/><path d="M2.600 2l.8 1.400.8-1.400M6.600 2l.8 1.400.8-1.400M10.600 2l.8 1.400.8-1.400" fill="none" stroke="#fafafa" stroke-width=".9"/><path d="M10.200 7.400l5.400 3.800-5.400 3.800z" fill="#1fba6a"/></svg>
<span style="left:63.6px;top:550.84px;font-size:11px;line-height:12.29px;color:#000;letter-spacing:-0.326px;">[0] Soft PLC</span>
<div style="left:31px;top:572px;width:12px;height:1px;background:repeating-linear-gradient(90deg,#808080 0 1px,transparent 1px 2px)"></div>
<svg style="left:42.5px;top:564px;" width="16" height="16" viewBox="0 0 16 16"><rect x="1.300" y="1.300" width="12.400" height="13" fill="#fafafa" stroke="#0a0a0a" stroke-width="1.400"/><path d="M1.300 2.600h12.400" stroke="#0a0a0a" stroke-width="3.200"/><path d="M5.400 4v10.400M9.500 4v4" stroke="#0a0a0a" stroke-width="1.400"/><path d="M2.600 2l.8 1.400.8-1.400M6.600 2l.8 1.400.8-1.400M10.600 2l.8 1.400.8-1.400" fill="none" stroke="#fafafa" stroke-width=".9"/><path d="M10.200 7.400l5.400 3.800-5.400 3.800z" fill="#1fba6a"/></svg>
<span style="left:63.6px;top:566.84px;font-size:11px;line-height:12.29px;color:#000;letter-spacing:-0.301px;">[1] Soft PLC (1)</span>
<div style="left:31px;top:588px;width:12px;height:1px;background:repeating-linear-gradient(90deg,#808080 0 1px,transparent 1px 2px)"></div>
<svg style="left:42.5px;top:580px;" width="16" height="16" viewBox="0 0 16 16"><path d="M7.500 3.200v9.600M2.700 8h9.600" stroke="#0f2f7a" stroke-width="2.100"/></svg>
<span style="left:63.6px;top:582.84px;font-size:11px;line-height:12.29px;color:#000;letter-spacing:-0.639px;">New</span>
<div style="left:17px;top:604px;width:6px;height:1px;background:repeating-linear-gradient(90deg,#808080 0 1px,transparent 1px 2px)"></div>
<div style="left:8px;top:600px;width:7px;height:7px;border:1px solid #919191;background:linear-gradient(135deg,#fff,#dde0ea);border-radius:1px"></div>
<div style="left:10px;top:604px;width:5px;height:1px;background:#3a3a5a;"></div>
<svg style="left:23px;top:596px;" width="16" height="16" viewBox="0 0 16 16"><rect x="1.200" y="1.600" width="13.600" height="12.800" fill="#f4f8fc" stroke="#222" stroke-width="1.300"/><path d="M4.400 10v-3.600M7.800 10v-5.600M11.200 10v-4.200" stroke="#222" stroke-width="1.800"/><path d="M2.400 12.800l3.200-3 2.400 2 5-5" fill="none" stroke="#2f9ad8" stroke-width="1.500"/><path d="M2.400 14l3.200-2.400 2.400 1.200 5-3.800" fill="none" stroke="#2f9ad8" stroke-width="1"/></svg>
<span style="left:44px;top:598.84px;font-size:11px;line-height:12.29px;color:#000;letter-spacing:-0.419px;">Reports</span>
<div style="left:31px;top:620px;width:12px;height:1px;background:repeating-linear-gradient(90deg,#808080 0 1px,transparent 1px 2px)"></div>
<svg style="left:42.5px;top:612px;" width="16" height="16" viewBox="0 0 16 16"><path d="M7.500 3.200v9.600M2.700 8h9.600" stroke="#0f2f7a" stroke-width="2.100"/></svg>
<span style="left:63.6px;top:614.84px;font-size:11px;line-height:12.29px;color:#000;letter-spacing:-0.639px;">New</span>
<div style="left:17px;top:636px;width:6px;height:1px;background:repeating-linear-gradient(90deg,#808080 0 1px,transparent 1px 2px)"></div>
<div style="left:8px;top:632px;width:7px;height:7px;border:1px solid #919191;background:linear-gradient(135deg,#fff,#dde0ea);border-radius:1px"></div>
<div style="left:10px;top:636px;width:5px;height:1px;background:#3a3a5a;"></div>
<svg style="left:23px;top:628px;" width="16" height="16" viewBox="0 0 16 16"><path d="M6.800 3v-2h5.800l2 2v7.600h-2" fill="#f4f4f4" stroke="#333" stroke-width="1.200"/><path d="M4 5.400v-2h5.800M2.400 11.400h-1.400v-7.800h2.600" fill="none" stroke="#333" stroke-width="1.200"/><path d="M5.200 5.800h4.800l2.400 2.400v7h-7.200z" fill="#f4f4f4" stroke="#333" stroke-width="1.300"/><path d="M9.800 6v2.400h2.400" fill="none" stroke="#333" stroke-width="1"/></svg>
<span style="left:44px;top:630.84px;font-size:11px;line-height:12.29px;color:#000;letter-spacing:-0.307px;">Recipes</span>
<div style="left:31px;top:652px;width:12px;height:1px;background:repeating-linear-gradient(90deg,#808080 0 1px,transparent 1px 2px)"></div>
<svg style="left:42.5px;top:644px;" width="16" height="16" viewBox="0 0 16 16"><path d="M6.800 3v-2h5.800l2 2v7.600h-2" fill="#f4f4f4" stroke="#333" stroke-width="1.200"/><path d="M4 5.400v-2h5.800M2.400 11.400h-1.400v-7.800h2.600" fill="none" stroke="#333" stroke-width="1.200"/><path d="M5.200 5.800h4.800l2.400 2.400v7h-7.200z" fill="#f4f4f4" stroke="#333" stroke-width="1.300"/><path d="M9.800 6v2.400h2.400" fill="none" stroke="#333" stroke-width="1"/></svg>
<span style="left:63.6px;top:646.84px;font-size:11px;line-height:12.29px;color:#000;letter-spacing:-0.193px;">[0] Recipe</span>
<div style="left:31px;top:668px;width:12px;height:1px;background:repeating-linear-gradient(90deg,#808080 0 1px,transparent 1px 2px)"></div>
<svg style="left:42.5px;top:660px;" width="16" height="16" viewBox="0 0 16 16"><path d="M6.800 3v-2h5.800l2 2v7.600h-2" fill="#f4f4f4" stroke="#333" stroke-width="1.200"/><path d="M4 5.400v-2h5.800M2.400 11.400h-1.400v-7.800h2.600" fill="none" stroke="#333" stroke-width="1.200"/><path d="M5.200 5.800h4.800l2.400 2.400v7h-7.200z" fill="#f4f4f4" stroke="#333" stroke-width="1.300"/><path d="M9.800 6v2.400h2.400" fill="none" stroke="#333" stroke-width="1"/></svg>
<span style="left:63.6px;top:662.84px;font-size:11px;line-height:12.29px;color:#000;letter-spacing:-0.195px;">[1] Recipe (1)</span>
<div style="left:31px;top:684px;width:12px;height:1px;background:repeating-linear-gradient(90deg,#808080 0 1px,transparent 1px 2px)"></div>
<svg style="left:42.5px;top:676px;" width="16" height="16" viewBox="0 0 16 16"><path d="M6.800 3v-2h5.800l2 2v7.600h-2" fill="#f4f4f4" stroke="#333" stroke-width="1.200"/><path d="M4 5.400v-2h5.800M2.400 11.400h-1.400v-7.800h2.600" fill="none" stroke="#333" stroke-width="1.200"/><path d="M5.200 5.800h4.800l2.400 2.400v7h-7.200z" fill="#f4f4f4" stroke="#333" stroke-width="1.300"/><path d="M9.800 6v2.400h2.400" fill="none" stroke="#333" stroke-width="1"/></svg>
<span style="left:63.6px;top:678.84px;font-size:11px;line-height:12.29px;color:#000;letter-spacing:-0.195px;">[2] Recipe (2)</span>
<div style="left:31px;top:700px;width:12px;height:1px;background:repeating-linear-gradient(90deg,#808080 0 1px,transparent 1px 2px)"></div>
<svg style="left:42.5px;top:692px;" width="16" height="16" viewBox="0 0 16 16"><path d="M7.500 3.200v9.600M2.700 8h9.600" stroke="#0f2f7a" stroke-width="2.100"/></svg>
<span style="left:63.6px;top:694.84px;font-size:11px;line-height:12.29px;color:#000;letter-spacing:-0.639px;">New</span>
<div style="left:31px;top:68px;width:1px;height:57px;background:repeating-linear-gradient(180deg,#808080 0 1px,transparent 1px 2px)"></div>
<div style="left:31px;top:148px;width:1px;height:57px;background:repeating-linear-gradient(180deg,#808080 0 1px,transparent 1px 2px)"></div>
<div style="left:31px;top:260px;width:1px;height:89px;background:repeating-linear-gradient(180deg,#808080 0 1px,transparent 1px 2px)"></div>
<div style="left:31px;top:372px;width:1px;height:73px;background:repeating-linear-gradient(180deg,#808080 0 1px,transparent 1px 2px)"></div>
<div style="left:31px;top:468px;width:1px;height:57px;background:repeating-linear-gradient(180deg,#808080 0 1px,transparent 1px 2px)"></div>
<div style="left:31px;top:548px;width:1px;height:41px;background:repeating-linear-gradient(180deg,#808080 0 1px,transparent 1px 2px)"></div>
<div style="left:31px;top:612px;width:1px;height:9px;background:repeating-linear-gradient(180deg,#808080 0 1px,transparent 1px 2px)"></div>
<div style="left:31px;top:644px;width:1px;height:57px;background:repeating-linear-gradient(180deg,#808080 0 1px,transparent 1px 2px)"></div>
<div style="left:166px;top:53px;width:600px;height:379px;background:#696969;"></div>
<svg style="left:173px;top:61.5px;" width="16" height="16" viewBox="0 0 16 16"><path d="M.800 4.400l2-1.400 8.600 7.200v5l-10.600-8.400z" fill="#9a78e2"/><path d="M.800 5.400v5.600l1.600 1 3-2.600-3-2.600z" fill="#6448b0"/><path d="M11.400 4.600l-5 4.200 1.800 1.600 3.200-2.400z" fill="#7c5cc8"/><path d="M11.400.800l3.800 1.600v11.200l-3.800 1.600z" fill="#c39bf9"/></svg>
<span style="left:196.5px;top:60.72px;font-size:16px;line-height:17.87px;color:#fff;letter-spacing:-0.079px;">[0] C# Script</span>
<div style="left:680px;top:71px;width:13px;height:2.6px;background:#fff;"></div>
<div style="left:710px;top:62px;width:8px;height:6px;border:2.5px solid #fff;border-top-width:4.5px;border-bottom-width:2px"></div>
<span style="left:741px;top:59.62px;font-size:17px;line-height:18.99px;color:#fff;font-weight:bold;-webkit-text-stroke:.5px #fff;">X</span>
<div style="left:169px;top:80px;width:594px;height:25px;background:#dfdfdf;"></div>
<div style="left:169px;top:80px;width:594px;height:1px;background:#f2f2f2;"></div>
<svg style="left:176px;top:85px;" width="15" height="15" viewBox="0 0 16 16"><path d="M6.5 1.5h5l3 3v10h-10v-6" fill="#fff" stroke="#3a3a3a" stroke-width="1.1"/><path d="M11.3 1.6v3.2h3.1" fill="none" stroke="#3a3a3a" stroke-width="1"/><g stroke="#d89a1e" stroke-width="1.1" stroke-linecap="round"><path d="M4 0.8v6.4M0.8 4h6.4M1.7 1.7l4.6 4.6M6.3 1.7l-4.6 4.6"/></g><circle cx="4" cy="4" r="1.1" fill="#fff2c0"/></svg>
<div style="left:196px;top:82px;width:120px;height:22px;background:#f4f4f4;"></div>
<div style="left:197px;top:83px;width:106px;height:20px;background:#dadada;"></div>
<div style="left:303px;top:83px;width:12px;height:20px;background:#bcdcf8;"></div>
<span style="left:201px;top:86.64px;font-size:12px;line-height:13.40px;color:#000;letter-spacing:-0.350px;">C# - C Sharp</span>
<div style="left:306px;top:92px;border:3.5px solid transparent;border-top:4px solid #111;width:0;height:0"></div>
<div style="left:318px;top:82px;width:76px;height:22px;background:#f4f4f4;"></div>
<div style="left:319px;top:83px;width:61px;height:20px;background:#dadada;"></div>
<div style="left:380px;top:83px;width:13px;height:20px;background:#f0f0f0;"></div>
<span style="left:323px;top:86.64px;font-size:12px;line-height:13.40px;color:#000;letter-spacing:-0.380px;">Dark</span>
<div style="left:383px;top:92px;border:3.5px solid transparent;border-top:4px solid #111;width:0;height:0"></div>
<div style="left:398px;top:85px;width:1px;height:17px;background:#c4c4c4;"></div>
<div style="left:399px;top:85px;width:1px;height:17px;background:#fafafa;"></div>
<div style="left:404px;top:86px;width:14px;height:2px;background:#14792a;"></div>
<div style="left:427px;top:86px;width:14px;height:2px;background:#222;"></div>
<div style="left:404px;top:90px;width:10px;height:2px;background:#14792a;"></div>
<div style="left:427px;top:90px;width:10px;height:2px;background:#222;"></div>
<div style="left:404px;top:94px;width:12px;height:2px;background:#14792a;"></div>
<div style="left:427px;top:94px;width:12px;height:2px;background:#222;"></div>
<div style="left:404px;top:98px;width:7px;height:2px;background:#14792a;"></div>
<div style="left:427px;top:98px;width:7px;height:2px;background:#222;"></div>
<div style="left:456px;top:87px;width:8px;height:1px;background:#333;"></div>
<div style="left:456px;top:99px;width:8px;height:1px;background:#333;"></div>
<div style="left:452px;top:90px;width:4px;height:2px;background:#333;"></div>
<div style="left:450px;top:94px;width:6px;height:2px;background:#333;"></div>
<div style="left:456px;top:89px;width:8px;height:9px;background:#d2e4f6;"></div>
<svg style="left:456px;top:88px;" width="9" height="11" viewBox="0 0 9 11"><path d="M8.500 5.500h-7M4.500 1.500l-3.500 4 3.500 4" fill="none" stroke="#1a4f8a" stroke-width="1.500"/></svg>
<div style="left:473px;top:87px;width:8px;height:1px;background:#333;"></div>
<div style="left:473px;top:99px;width:8px;height:1px;background:#333;"></div>
<div style="left:481px;top:90px;width:4px;height:2px;background:#333;"></div>
<div style="left:481px;top:94px;width:6px;height:2px;background:#333;"></div>
<div style="left:473px;top:89px;width:8px;height:9px;background:#d2e4f6;"></div>
<svg style="left:473px;top:88px;" width="9" height="11" viewBox="0 0 9 11"><path d="M.500 5.500h7M4.500 1.500l3.500 4-3.500 4" fill="none" stroke="#1a4f8a" stroke-width="1.500"/></svg>
<svg style="left:642px;top:85px;" width="15" height="15" viewBox="0 0 16 16"><path d="M1.6 8.6l3.8 4 8.6-9.6" fill="none" stroke="#3f9a3a" stroke-width="2.1"/></svg>
<span style="left:661px;top:86.64px;font-size:12px;line-height:13.40px;color:#000;letter-spacing:0.069px;">Compile</span>
<svg style="left:715px;top:85px;" width="14" height="14" viewBox="0 0 16 16"><path d="M3.6 1.4l9 6.6-9 6.6z" fill="#2f9a2a"/></svg>
<span style="left:733px;top:86.64px;font-size:12px;line-height:13.40px;color:#000;letter-spacing:-0.505px;">Run</span>
<div style="left:169px;top:105px;width:594px;height:324px;background:#1e1e1e;"></div>
<div style="left:169px;top:105px;width:594px;height:324px;overflow:hidden">
<span class="cd dk" style="left:63px;top:-14px"><b class="k">using</b> System;</span>
<div style="left:63px;top:213px;width:531px;height:15px;border:2px solid #282828;border-right:0"></div>
<div style="left:63px;top:42px;width:1px;height:209px;background:#404040"></div>
<div style="left:94px;top:118px;width:1px;height:114px;background:#707070"></div>
<div style="left:125px;top:137px;width:1px;height:19px;background:#404040"></div>
<div style="left:125px;top:175px;width:1px;height:19px;background:#404040"></div>
<span class="cd dk ln" style="left:29.30px;top:5px">2</span>
<span class="cd dk ln" style="left:29.30px;top:24px">3</span>
<span class="cd dk ln" style="left:29.30px;top:43px">4</span>
<span class="cd dk ln" style="left:29.30px;top:62px">5</span>
<span class="cd dk ln" style="left:29.30px;top:81px">6</span>
<span class="cd dk ln" style="left:29.30px;top:100px">7</span>
<span class="cd dk ln" style="left:29.30px;top:119px">8</span>
<span class="cd dk ln" style="left:29.30px;top:138px">9</span>
<span class="cd dk ln" style="left:21.60px;top:157px">10</span>
<span class="cd dk ln" style="left:21.60px;top:176px">11</span>
<span class="cd dk ln" style="left:21.60px;top:195px">12</span>
<span class="cd dk ln lna" style="left:21.60px;top:214px">13</span>
<span class="cd dk ln" style="left:21.60px;top:233px">14</span>
<span class="cd dk ln" style="left:21.60px;top:252px">15</span>
<span class="cd dk" style="left:63px;top:24px"><b class="k">public</b> <b class="k">class</b> MainClass<b class="y">{</b></span>
<span class="cd dk" style="left:63px;top:43px">    Int16 Tag_1;</span>
<span class="cd dk" style="left:63px;top:62px">    Int16 Tag_2;</span>
<span class="cd dk" style="left:63px;top:81px">    <b class="k">bool</b> Tag_3;</span>
<span class="cd dk" style="left:63px;top:100px">    <b class="k">public</b> <b class="k">static</b> <b class="k">void</b> Main<b class="p">()</b><b class="p">{</b></span>
<span class="cd dk" style="left:63px;top:119px">        <b class="k">if</b><b class="b">(</b>Tag_1 &lt; Tag_2<b class="b">){</b></span>
<span class="cd dk" style="left:63px;top:138px">            Tag_3 = <b class="k">true</b>;</span>
<span class="cd dk" style="left:63px;top:157px">        <b class="b">}</b><b class="k">else</b><b class="b">{</b></span>
<span class="cd dk" style="left:63px;top:176px">            Tag_3 = <b class="k">false</b>;</span>
<span class="cd dk" style="left:63px;top:195px">        <b class="b">}</b></span>
<span class="cd dk" style="left:63px;top:214px">        Tag</span>
<span class="cd dk" style="left:63px;top:233px">    <b class="p">}</b></span>
<span class="cd dk" style="left:63px;top:252px"><b class="y">}</b></span>
<div style="left:285.7px;top:99px;width:7px;height:17px;border:1px solid #888"></div>
<div style="left:93.3px;top:232px;width:7px;height:17px;border:1px solid #888"></div>
<div style="left:0;top:0;width:594px;height:6px;background:linear-gradient(#000,rgba(0,0,0,0))"></div>
<div style="left:581px;top:0px;width:1px;height:324px;background:#2e2e2e;"></div>
<div style="left:582px;top:7px;width:12px;height:182px;background:#4a4a4a;"></div>
<div style="left:582px;top:122.5px;width:12px;height:2px;background:#a8a8a8;"></div>
<div style="left:582px;top:0px;width:12px;height:7px;background:#161616;"></div>
<div style="left:135px;top:232px;width:429px;height:59px;background:#252526;border:1px solid #454545"></div>
<div style="left:136px;top:233px;width:429px;height:19px;background:#04395e;"></div>
<span style="left:138px;top:237.45px;font-size:10px;line-height:11.17px;color:#e8e8e8;letter-spacing:-0.375px;">abc</span>
<span class="cd dk" style="left:157.5px;top:235px"><b class="hl">Tag</b><b class="w">_1</b></span>
<span style="left:138px;top:256.45px;font-size:10px;line-height:11.17px;color:#c8c8c8;letter-spacing:-0.375px;">abc</span>
<span class="cd dk" style="left:157.5px;top:254px"><b class="hl">Tag</b>_2</span>
<span style="left:138px;top:275.45px;font-size:10px;line-height:11.17px;color:#c8c8c8;letter-spacing:-0.375px;">abc</span>
<span class="cd dk" style="left:157.5px;top:273px"><b class="hl">Tag</b>_3</span>
</div>
<div style="left:766px;top:54px;width:598px;height:378px;background:#bebebe;"></div>
<div style="left:766px;top:52px;width:598px;height:2px;background:#727272;"></div>
<svg style="left:773px;top:63px;" width="16" height="16" viewBox="0 0 16 16"><path d="M11.400 .8l3.800 1.600v11.200l-3.800 1.600-6.400-5.800-2.800 2.200-1.400-.8v-5.600l1.400-.8 2.800 2.200z" fill="#8a6fd8"/><path d="M11.400 .8l3.800 1.600v11.200l-3.800 1.600z" fill="#b58cf0"/><path d="M11.400 4.800v6.400l-4-3.200z" fill="#e8dcfa"/><path d="M.8 5.200l1.400-.8 2.800 2.200v2.800l-2.800 2.200-1.400-.8z" fill="#6a55b8"/><path d="M2.200 6.400v3.200l1.600-1.600z" fill="#dcd0f4"/></svg>
<span style="left:796.5px;top:62.32px;font-size:16px;line-height:17.87px;color:#6a6a6a;letter-spacing:-0.148px;">[1] VB Script</span>
<div style="left:1278px;top:72px;width:13px;height:2.6px;background:#6a6a6a;"></div>
<div style="left:1308px;top:64px;width:8px;height:6px;border:2.5px solid #6a6a6a;border-top-width:4.5px;border-bottom-width:2px"></div>
<span style="left:1339px;top:61.62px;font-size:17px;line-height:18.99px;color:#6a6a6a;font-weight:bold;-webkit-text-stroke:.5px #6a6a6a;">X</span>
<div style="left:769px;top:82px;width:592px;height:25px;background:#dfdfdf;"></div>
<div style="left:769px;top:82px;width:592px;height:1px;background:#f2f2f2;"></div>
<svg style="left:776px;top:87px;" width="15" height="15" viewBox="0 0 16 16"><path d="M6.5 1.5h5l3 3v10h-10v-6" fill="#fff" stroke="#3a3a3a" stroke-width="1.1"/><path d="M11.3 1.6v3.2h3.1" fill="none" stroke="#3a3a3a" stroke-width="1"/><g stroke="#d89a1e" stroke-width="1.1" stroke-linecap="round"><path d="M4 0.8v6.4M0.8 4h6.4M1.7 1.7l4.6 4.6M6.3 1.7l-4.6 4.6"/></g><circle cx="4" cy="4" r="1.1" fill="#fff2c0"/></svg>
<div style="left:796px;top:84px;width:120px;height:22px;background:#f4f4f4;"></div>
<div style="left:797px;top:85px;width:106px;height:20px;background:#dadada;"></div>
<div style="left:903px;top:85px;width:12px;height:20px;background:#f0f0f0;"></div>
<span style="left:801px;top:88.64px;font-size:12px;line-height:13.40px;color:#000;letter-spacing:-0.324px;">VB - Visual Basic</span>
<div style="left:906px;top:94px;border:3.5px solid transparent;border-top:4px solid #111;width:0;height:0"></div>
<div style="left:918px;top:84px;width:76px;height:22px;background:#f4f4f4;"></div>
<div style="left:919px;top:85px;width:61px;height:20px;background:#dadada;"></div>
<div style="left:980px;top:85px;width:13px;height:20px;background:#f0f0f0;"></div>
<span style="left:923px;top:88.64px;font-size:12px;line-height:13.40px;color:#000;letter-spacing:-0.312px;">Light</span>
<div style="left:983px;top:94px;border:3.5px solid transparent;border-top:4px solid #111;width:0;height:0"></div>
<div style="left:998px;top:87px;width:1px;height:17px;background:#c4c4c4;"></div>
<div style="left:999px;top:87px;width:1px;height:17px;background:#fafafa;"></div>
<div style="left:1004px;top:88px;width:14px;height:2px;background:#14792a;"></div>
<div style="left:1027px;top:88px;width:14px;height:2px;background:#222;"></div>
<div style="left:1004px;top:92px;width:10px;height:2px;background:#14792a;"></div>
<div style="left:1027px;top:92px;width:10px;height:2px;background:#222;"></div>
<div style="left:1004px;top:96px;width:12px;height:2px;background:#14792a;"></div>
<div style="left:1027px;top:96px;width:12px;height:2px;background:#222;"></div>
<div style="left:1004px;top:100px;width:7px;height:2px;background:#14792a;"></div>
<div style="left:1027px;top:100px;width:7px;height:2px;background:#222;"></div>
<div style="left:1056px;top:89px;width:8px;height:1px;background:#333;"></div>
<div style="left:1056px;top:101px;width:8px;height:1px;background:#333;"></div>
<div style="left:1052px;top:92px;width:4px;height:2px;background:#333;"></div>
<div style="left:1050px;top:96px;width:6px;height:2px;background:#333;"></div>
<div style="left:1056px;top:91px;width:8px;height:9px;background:#d2e4f6;"></div>
<svg style="left:1056px;top:90px;" width="9" height="11" viewBox="0 0 9 11"><path d="M8.500 5.500h-7M4.500 1.500l-3.500 4 3.500 4" fill="none" stroke="#1a4f8a" stroke-width="1.500"/></svg>
<div style="left:1073px;top:89px;width:8px;height:1px;background:#333;"></div>
<div style="left:1073px;top:101px;width:8px;height:1px;background:#333;"></div>
<div style="left:1081px;top:92px;width:4px;height:2px;background:#333;"></div>
<div style="left:1081px;top:96px;width:6px;height:2px;background:#333;"></div>
<div style="left:1073px;top:91px;width:8px;height:9px;background:#d2e4f6;"></div>
<svg style="left:1073px;top:90px;" width="9" height="11" viewBox="0 0 9 11"><path d="M.500 5.500h7M4.500 1.500l3.500 4-3.500 4" fill="none" stroke="#1a4f8a" stroke-width="1.500"/></svg>
<svg style="left:1240px;top:87px;" width="15" height="15" viewBox="0 0 16 16"><path d="M1.6 8.6l3.8 4 8.6-9.6" fill="none" stroke="#3f9a3a" stroke-width="2.1"/></svg>
<span style="left:1259px;top:88.64px;font-size:12px;line-height:13.40px;color:#000;letter-spacing:0.069px;">Compile</span>
<svg style="left:1313px;top:87px;" width="14" height="14" viewBox="0 0 16 16"><path d="M3.6 1.4l9 6.6-9 6.6z" fill="#2f9a2a"/></svg>
<span style="left:1331px;top:88.64px;font-size:12px;line-height:13.40px;color:#000;letter-spacing:-0.505px;">Run</span>
<div style="left:769px;top:106px;width:592px;height:322px;background:#fffffe;"></div>
<div style="left:769px;top:106px;width:592px;height:322px;overflow:hidden">
<div style="left:63px;top:19px;width:529px;height:15px;border:2px solid #eeeeee;border-right:0"></div>
<div style="left:63px;top:57px;width:1px;height:190px;background:#d3d3d3"></div>
<div style="left:94px;top:133px;width:1px;height:95px;background:#d3d3d3"></div>
<div style="left:125px;top:152px;width:1px;height:19px;background:#d3d3d3"></div>
<div style="left:125px;top:190px;width:1px;height:19px;background:#d3d3d3"></div>
<span class="cd lt ln" style="left:29.30px;top:1px">1</span>
<span class="cd lt ln lna" style="left:29.30px;top:20px">2</span>
<span class="cd lt ln" style="left:29.30px;top:39px">3</span>
<span class="cd lt ln" style="left:29.30px;top:58px">4</span>
<span class="cd lt ln" style="left:29.30px;top:77px">5</span>
<span class="cd lt ln" style="left:29.30px;top:96px">6</span>
<span class="cd lt ln" style="left:29.30px;top:115px">7</span>
<span class="cd lt ln" style="left:29.30px;top:134px">8</span>
<span class="cd lt ln" style="left:29.30px;top:153px">9</span>
<span class="cd lt ln" style="left:21.60px;top:172px">10</span>
<span class="cd lt ln" style="left:21.60px;top:191px">11</span>
<span class="cd lt ln" style="left:21.60px;top:210px">12</span>
<span class="cd lt ln" style="left:21.60px;top:229px">13</span>
<span class="cd lt ln" style="left:21.60px;top:248px">14</span>
<span class="cd lt" style="left:63.5px;top:1px"><b class="k">Imports</b> System</span>
<span class="cd lt" style="left:63.5px;top:39px"><b class="k">Public</b> <b class="y">Class</b> MainClass</span>
<span class="cd lt" style="left:63.5px;top:58px">    <b class="k">Public</b> Tag_1 <b class="k">as</b> UInt16</span>
<span class="cd lt" style="left:63.5px;top:77px">    <b class="k">Public</b> Tag_2 <b class="k">as</b> UInt16</span>
<span class="cd lt" style="left:63.5px;top:96px">    <b class="k">Public</b> Tag_3 <b class="k">as</b> <b class="k">Boolean</b></span>
<span class="cd lt" style="left:63.5px;top:115px">    <b class="k">Public</b> <b class="k">Shared</b> <b class="p">Sub</b> Main</span>
<span class="cd lt" style="left:63.5px;top:134px">        <b class="k">if</b> Tag_1 <b class="r">&lt;</b> Tag_2 <b class="k">Then</b></span>
<span class="cd lt" style="left:63.5px;top:153px">            Tag_3 = <b class="k">true</b></span>
<span class="cd lt" style="left:63.5px;top:172px">        <b class="k">else</b></span>
<span class="cd lt" style="left:63.5px;top:191px">            Tag_3 = <b class="k">false</b></span>
<span class="cd lt" style="left:63.5px;top:210px">        <b class="b">End If</b></span>
<span class="cd lt" style="left:63.5px;top:229px">    <b class="p">End Sub</b></span>
<span class="cd lt" style="left:63.5px;top:248px"><b class="y">End Class</b></span>
<div style="left:579px;top:0px;width:1px;height:322px;background:#e4e4e4;"></div>
<div style="left:580px;top:9px;width:12px;height:2px;background:#333;"></div>
</div>
<div style="left:766px;top:429px;width:598px;height:380px;background:#c0c0c0;"></div>
<div style="left:766px;top:804px;width:598px;height:5px;background:#b0b0b0;"></div>
<svg style="left:776px;top:439px;" width="16" height="16" viewBox="0 0 16 16"><path d="M11.400 .8l3.800 1.600v11.200l-3.800 1.600-6.400-5.800-2.800 2.200-1.400-.8v-5.600l1.400-.8 2.800 2.200z" fill="#8a6fd8"/><path d="M11.400 .8l3.800 1.600v11.200l-3.800 1.600z" fill="#b58cf0"/><path d="M11.400 4.800v6.400l-4-3.200z" fill="#e8dcfa"/><path d="M.8 5.200l1.400-.8 2.800 2.200v2.800l-2.800 2.200-1.400-.8z" fill="#6a55b8"/><path d="M2.200 6.400v3.200l1.600-1.600z" fill="#dcd0f4"/></svg>
<span style="left:799px;top:437.32px;font-size:16px;line-height:17.87px;color:#6a6a6a;letter-spacing:-0.151px;">[2] VB Script 2</span>
<div style="left:1279px;top:447.5px;width:13px;height:2.6px;background:#6a6a6a;"></div>
<div style="left:1309px;top:439px;width:8px;height:6px;border:2.5px solid #6a6a6a;border-top-width:4.5px;border-bottom-width:2px"></div>
<span style="left:1339.5px;top:437.12px;font-size:17px;line-height:18.99px;color:#6a6a6a;font-weight:bold;-webkit-text-stroke:.5px #6a6a6a;">X</span>
<div style="left:771px;top:457px;width:591px;height:25px;background:#dfdfdf;"></div>
<div style="left:771px;top:457px;width:591px;height:1px;background:#f2f2f2;"></div>
<svg style="left:778px;top:462px;" width="15" height="15" viewBox="0 0 16 16"><path d="M6.5 1.5h5l3 3v10h-10v-6" fill="#fff" stroke="#3a3a3a" stroke-width="1.1"/><path d="M11.3 1.6v3.2h3.1" fill="none" stroke="#3a3a3a" stroke-width="1"/><g stroke="#d89a1e" stroke-width="1.1" stroke-linecap="round"><path d="M4 0.8v6.4M0.8 4h6.4M1.7 1.7l4.6 4.6M6.3 1.7l-4.6 4.6"/></g><circle cx="4" cy="4" r="1.1" fill="#fff2c0"/></svg>
<div style="left:798px;top:459px;width:120px;height:22px;background:#f4f4f4;"></div>
<div style="left:799px;top:460px;width:106px;height:20px;background:#dadada;"></div>
<div style="left:905px;top:460px;width:12px;height:20px;background:#f0f0f0;"></div>
<span style="left:803px;top:463.64px;font-size:12px;line-height:13.40px;color:#000;letter-spacing:-0.324px;">VB - Visual Basic</span>
<div style="left:908px;top:469px;border:3.5px solid transparent;border-top:4px solid #111;width:0;height:0"></div>
<div style="left:920px;top:459px;width:76px;height:22px;background:#f4f4f4;"></div>
<div style="left:921px;top:460px;width:61px;height:20px;background:#dadada;"></div>
<div style="left:982px;top:460px;width:13px;height:20px;background:#f0f0f0;"></div>
<span style="left:925px;top:463.64px;font-size:12px;line-height:13.40px;color:#000;letter-spacing:-0.380px;">Dark</span>
<div style="left:985px;top:469px;border:3.5px solid transparent;border-top:4px solid #111;width:0;height:0"></div>
<div style="left:1000px;top:462px;width:1px;height:17px;background:#c4c4c4;"></div>
<div style="left:1001px;top:462px;width:1px;height:17px;background:#fafafa;"></div>
<div style="left:1006px;top:463px;width:14px;height:2px;background:#14792a;"></div>
<div style="left:1029px;top:463px;width:14px;height:2px;background:#222;"></div>
<div style="left:1006px;top:467px;width:10px;height:2px;background:#14792a;"></div>
<div style="left:1029px;top:467px;width:10px;height:2px;background:#222;"></div>
<div style="left:1006px;top:471px;width:12px;height:2px;background:#14792a;"></div>
<div style="left:1029px;top:471px;width:12px;height:2px;background:#222;"></div>
<div style="left:1006px;top:475px;width:7px;height:2px;background:#14792a;"></div>
<div style="left:1029px;top:475px;width:7px;height:2px;background:#222;"></div>
<div style="left:1058px;top:464px;width:8px;height:1px;background:#333;"></div>
<div style="left:1058px;top:476px;width:8px;height:1px;background:#333;"></div>
<div style="left:1054px;top:467px;width:4px;height:2px;background:#333;"></div>
<div style="left:1052px;top:471px;width:6px;height:2px;background:#333;"></div>
<div style="left:1058px;top:466px;width:8px;height:9px;background:#d2e4f6;"></div>
<svg style="left:1058px;top:465px;" width="9" height="11" viewBox="0 0 9 11"><path d="M8.500 5.500h-7M4.500 1.500l-3.500 4 3.500 4" fill="none" stroke="#1a4f8a" stroke-width="1.500"/></svg>
<div style="left:1075px;top:464px;width:8px;height:1px;background:#333;"></div>
<div style="left:1075px;top:476px;width:8px;height:1px;background:#333;"></div>
<div style="left:1083px;top:467px;width:4px;height:2px;background:#333;"></div>
<div style="left:1083px;top:471px;width:6px;height:2px;background:#333;"></div>
<div style="left:1075px;top:466px;width:8px;height:9px;background:#d2e4f6;"></div>
<svg style="left:1075px;top:465px;" width="9" height="11" viewBox="0 0 9 11"><path d="M.500 5.500h7M4.500 1.500l3.500 4-3.500 4" fill="none" stroke="#1a4f8a" stroke-width="1.500"/></svg>
<svg style="left:1241px;top:462px;" width="15" height="15" viewBox="0 0 16 16"><path d="M1.6 8.6l3.8 4 8.6-9.6" fill="none" stroke="#3f9a3a" stroke-width="2.1"/></svg>
<span style="left:1260px;top:463.64px;font-size:12px;line-height:13.40px;color:#000;letter-spacing:0.069px;">Compile</span>
<svg style="left:1314px;top:462px;" width="14" height="14" viewBox="0 0 16 16"><path d="M3.6 1.4l9 6.6-9 6.6z" fill="#2f9a2a"/></svg>
<span style="left:1332px;top:463.64px;font-size:12px;line-height:13.40px;color:#000;letter-spacing:-0.505px;">Run</span>
<div style="left:771px;top:481px;width:591px;height:322px;background:#1e1e1e;"></div>
<div style="left:771px;top:481px;width:591px;height:322px;overflow:hidden">
<div style="left:63px;top:133px;width:528px;height:15px;border:2px solid #282828;border-right:0"></div>
<div style="left:63px;top:57px;width:1px;height:190px;background:#404040"></div>
<div style="left:94px;top:133px;width:1px;height:95px;background:#404040"></div>
<div style="left:125px;top:152px;width:1px;height:19px;background:#707070"></div>
<div style="left:125px;top:190px;width:1px;height:19px;background:#404040"></div>
<div style="left:255.5px;top:133px;width:30.8px;height:19px;background:#3a3d41"></div>
<span class="cd dk ln" style="left:29.30px;top:1px">1</span>
<span class="cd dk ln" style="left:29.30px;top:20px">2</span>
<span class="cd dk ln" style="left:29.30px;top:39px">3</span>
<span class="cd dk ln" style="left:29.30px;top:58px">4</span>
<span class="cd dk ln" style="left:29.30px;top:77px">5</span>
<span class="cd dk ln" style="left:29.30px;top:96px">6</span>
<span class="cd dk ln" style="left:29.30px;top:115px">7</span>
<span class="cd dk ln lna" style="left:29.30px;top:134px">8</span>
<span class="cd dk ln" style="left:29.30px;top:153px">9</span>
<span class="cd dk ln" style="left:21.60px;top:172px">10</span>
<span class="cd dk ln" style="left:21.60px;top:191px">11</span>
<span class="cd dk ln" style="left:21.60px;top:210px">12</span>
<span class="cd dk ln" style="left:21.60px;top:229px">13</span>
<span class="cd dk ln" style="left:21.60px;top:248px">14</span>
<span class="cd dk" style="left:63px;top:1px"><b class="k">Imports</b> System</span>
<span class="cd dk" style="left:63px;top:39px"><b class="k">Public</b> <b class="y">Class</b> MainClass</span>
<span class="cd dk" style="left:63px;top:58px">    <b class="k">Public</b> Tag_1 <b class="k">as</b> UInt16</span>
<span class="cd dk" style="left:63px;top:77px">    <b class="k">Public</b> Tag_2 <b class="k">as</b> UInt16</span>
<span class="cd dk" style="left:63px;top:96px">    <b class="k">Public</b> Tag_3 <b class="k">as</b> <b class="k">Boolean</b></span>
<span class="cd dk" style="left:63px;top:115px">    <b class="k">Public</b> <b class="k">Shared</b> <b class="p">Sub</b> Main</span>
<span class="cd dk" style="left:63px;top:134px">        <b class="k">if</b> Tag_1 <b class="r">&lt;</b> Tag_2 <b class="k">Then</b></span>
<span class="cd dk" style="left:63px;top:153px">            Tag_3 = <b class="k">true</b></span>
<span class="cd dk" style="left:63px;top:172px">        <b class="k">else</b></span>
<span class="cd dk" style="left:63px;top:191px">            Tag_3 = <b class="k">false</b></span>
<span class="cd dk" style="left:63px;top:210px">        <b class="b">End If</b></span>
<span class="cd dk" style="left:63px;top:229px">    <b class="p">End Sub</b></span>
<span class="cd dk" style="left:63px;top:248px"><b class="y">End Class</b></span>
<div style="left:578px;top:0px;width:1px;height:322px;background:#2e2e2e;"></div>
<div style="left:579px;top:75px;width:12px;height:4px;background:#a0a0a0;"></div>
<div style="left:579px;top:75px;width:4px;height:10px;background:#a0a0a0;"></div>
</div>
<div style="left:166px;top:432px;width:602px;height:377px;background:#c4c4c4;"></div>
<div style="left:764px;top:432px;width:4px;height:377px;background:#b2b2b2;"></div>
<div style="left:166px;top:803px;width:602px;height:6px;background:#b0b0b0;"></div>
<div style="left:166px;top:432px;width:1.5px;height:377px;background:#d2d2d2;"></div>
<svg style="left:177px;top:439px;" width="15" height="15" viewBox="0 0 16 16"><rect x="1.300" y="1.300" width="12.400" height="13" fill="#fafafa" stroke="#0a0a0a" stroke-width="1.400"/><path d="M1.300 2.600h12.400" stroke="#0a0a0a" stroke-width="3.200"/><path d="M5.400 4v10.400M9.500 4v4" stroke="#0a0a0a" stroke-width="1.400"/><path d="M2.600 2l.8 1.400.8-1.400M6.600 2l.8 1.400.8-1.400M10.600 2l.8 1.400.8-1.400" fill="none" stroke="#fafafa" stroke-width=".9"/><path d="M10.200 7.400l5.400 3.800-5.400 3.800z" fill="#1fba6a"/></svg>
<span style="left:198.5px;top:438.32px;font-size:16px;line-height:17.87px;color:#6a6a6a;letter-spacing:-0.230px;">[0] Soft PLC</span>
<div style="left:678px;top:448px;width:13px;height:2.6px;background:#6a6a6a;"></div>
<div style="left:708px;top:440px;width:8px;height:6px;border:2.5px solid #6a6a6a;border-top-width:4.5px;border-bottom-width:2px"></div>
<span style="left:739px;top:437.62px;font-size:17px;line-height:18.99px;color:#6a6a6a;font-weight:bold;-webkit-text-stroke:.5px #6a6a6a;">X</span>
<div style="left:171px;top:458px;width:590px;height:26px;background:#6ab1f8;"></div>
<div style="left:171px;top:483px;width:590px;height:1px;background:#a8d0f8;"></div>
<div style="left:759px;top:458px;width:2px;height:26px;background:#a8d0f8;"></div>
<svg style="left:179px;top:463px;" width="14" height="14" viewBox="0 0 16 16"><rect x="0" y="0" width="16" height="16" fill="#1c2430"/><rect x="0" y="0" width="16" height="16" fill="none" stroke="#8a8a8a" stroke-width="1.600"/><circle cx="5.600" cy="5.200" r="2.500" fill="none" stroke="#7aa0c8" stroke-width="1.500"/><circle cx="10" cy="10.400" r="3.200" fill="none" stroke="#9abce0" stroke-width="1.900"/><circle cx="4" cy="10.200" r="1.200" fill="#7aa0c8"/></svg>
<span style="left:201px;top:462.12px;font-size:16px;line-height:17.87px;color:#4d79ad;letter-spacing:0.267px;">Fulmatic SOFT C:\Users\Salih\AppData\Local\Temp\cbfb3b...</span>
<div style="left:657px;top:461px;width:100px;height:18px;background:#e6e6e6;border:1px solid #bcd8f0"></div>
<div style="left:658px;top:462px;width:60px;height:18px;background:#22c322;"></div>
<div style="left:171px;top:484px;width:590px;height:24px;background:#dfdfdf;"></div>
<div style="left:171px;top:507px;width:590px;height:1px;background:#f4f4f4;"></div>
<svg style="left:177px;top:489px;" width="16" height="16" viewBox="0 0 16 16"><path d="M13.8 1.2l1 1-7.6 8-1.4-1.4z" fill="#b0b0b0" stroke="#999" stroke-width=".5"/><path d="M14.6 .8l.6.6-2 2.2" stroke="#999" stroke-width=".8" fill="none"/><path d="M1.2 13.4l4.6-4.8 1.8 1.8-4.6 4.8q-1.4.4-1.8-1.8z" fill="#9a9a9a" stroke="#888" stroke-width=".5"/><path d="M2.2 1.4q-1.8 1.8-.4 4 1.600 1.400 3.200.8l8 8.200q1.400.6 2-1.200l-8-8.400q.8-2-.8-3.600-1.200-.8-2.400-.4l2 2-1.600 1.800z" fill="#9a9a9a"/></svg>
<svg style="left:200px;top:489px;" width="16" height="16" viewBox="0 0 16 16"><circle cx="8" cy="8" r="7.3" fill="#1e9ad6" stroke="#8fd0f0" stroke-width=".6"/><path d="M5.6 6.4q0-2.5 2.5-2.5 2.4 0 2.4 2.1 0 1.2-1.2 1.9-1 .6-1 1.7" fill="none" stroke="#fff" stroke-width="1.9"/><rect x="7.3" y="10.9" width="1.9" height="1.9" fill="#fff"/></svg>
<svg style="left:223px;top:489px;" width="16" height="16" viewBox="0 0 16 16"><circle cx="8" cy="8" r="7.3" fill="#1e9ad6" stroke="#8fd0f0" stroke-width=".6"/><rect x="7" y="6.6" width="2.1" height="6.2" fill="#fff"/><circle cx="8.05" cy="4.3" r="1.3" fill="#fff"/></svg>
<div style="left:246px;top:488px;width:1px;height:18px;background:#bdbdbd;"></div>
<div style="left:247px;top:488px;width:1px;height:18px;background:#f8f8f8;"></div>
<svg style="left:252px;top:489px;" width="16" height="16" viewBox="0 0 16 16"><rect x="1.6" y="1.6" width="12.8" height="12.8" fill="#f4f4f4" stroke="#3c3c3c" stroke-width="1.2"/><path d="M4.2 11.8l7.6-7.6M7.8 4h4.2v4.2M8.2 12h-4.2v-4.2" fill="none" stroke="#3c3c3c" stroke-width="1.1"/></svg>
<svg style="left:275px;top:489px;" width="16" height="16" viewBox="0 0 16 16"><rect x="1.6" y="1.6" width="12.8" height="12.8" fill="#e6e6e6" stroke="#9a9a9a" stroke-width="1.2"/><path d="M1.6 5.9h12.8M1.6 10.1h12.8" stroke="#9a9a9a" stroke-width="1.2"/></svg>
<svg style="left:298px;top:489px;" width="16" height="16" viewBox="0 0 16 16"><rect x="1.6" y="1.6" width="12.8" height="12.8" fill="#e6e6e6" stroke="#9a9a9a" stroke-width="1.2"/><path d="M8 1.6v12.8" stroke="#9a9a9a" stroke-width="1.2"/></svg>
<svg style="left:321px;top:489px;" width="16" height="16" viewBox="0 0 16 16"><rect x="1.6" y="1.6" width="12.8" height="12.8" fill="#e6e6e6" stroke="#9a9a9a" stroke-width="1.2"/><path d="M1.6 7.4h12.8" stroke="#9a9a9a" stroke-width="1.2"/></svg>
<svg style="left:344px;top:489px;" width="16" height="16" viewBox="0 0 16 16"><rect x="1.6" y="1.6" width="12.8" height="12.8" fill="#e6e6e6" stroke="#9a9a9a" stroke-width="1.2"/><path d="M8 1.6v12.8M1.6 8h12.8" stroke="#9a9a9a" stroke-width="1.2"/></svg>
<svg style="left:367px;top:489px;" width="16" height="16" viewBox="0 0 16 16"><path d="M3.5 2.5v-1.7h11.7v11.7h-1.7" fill="none" stroke="#3c3c3c" stroke-width="1"/><rect x="1.2" y="2.6" width="12" height="12" fill="#f4f4f4" stroke="#3c3c3c" stroke-width="1.2"/><path d="M4 5.4l6.4 6.4M10.4 5.4l-6.4 6.4" stroke="#a82214" stroke-width="2.3"/></svg>
<div style="left:390px;top:488px;width:1px;height:18px;background:#bdbdbd;"></div>
<div style="left:391px;top:488px;width:1px;height:18px;background:#f8f8f8;"></div>
<svg style="left:396px;top:489px;" width="16" height="16" viewBox="0 0 16 16"><rect x="11.800" y="2.400" width="2.800" height="12.800" fill="#9a9a9a"/><rect x="7" y="3" width="5" height="3.200" fill="#fafafa" stroke="#9a9a9a" stroke-width=".800"/><rect x="4.800" y="7.300" width="5.200" height="3" fill="#fafafa" stroke="#9a9a9a" stroke-width=".800"/><rect x="5.800" y="11.400" width="6.200" height="3.300" fill="#fafafa" stroke="#9a9a9a" stroke-width=".900"/><path d="M4.800 7.300v6h1" fill="none" stroke="#9a9a9a" stroke-width="1"/><path d="M4 .800v6.200M.900 3.900h6.200" stroke="#9a9a9a" stroke-width="2.100"/></svg>
<svg style="left:419px;top:489px;" width="16" height="16" viewBox="0 0 16 16"><rect x="1" y="5" width="4.800" height="3.400" fill="#fff" stroke="#14496e" stroke-width="1"/><path d="M5.800 6.700h3" stroke="#14496e" stroke-width="1.200"/><path d="M8 4.700l2.600 2-2.600 2z" fill="#14496e"/><rect x="10.800" y="1" width="4.400" height="3.400" fill="#fff" stroke="#2a2a2a" stroke-width="1"/><rect x="10.800" y="8" width="4.400" height="3.300" fill="#fff" stroke="#2a2a2a" stroke-width="1"/><rect x="10.800" y="11.300" width="4.400" height="3.400" fill="#fff" stroke="#2a2a2a" stroke-width="1"/></svg>
<svg style="left:442px;top:489px;" width="16" height="16" viewBox="0 0 16 16"><path d="M4.2 1l5.6 10.6M11.8 1l-5.6 10.6" stroke="#333" stroke-width="1.5" fill="none"/><circle cx="4.4" cy="12.8" r="2" fill="#f4f4f4" stroke="#333" stroke-width="1.3"/><circle cx="11.6" cy="12.8" r="2" fill="#f4f4f4" stroke="#333" stroke-width="1.3"/></svg>
<svg style="left:465px;top:489px;" width="16" height="16" viewBox="0 0 16 16"><path d="M1.7 1.2h6.2l1.8 1.8v9h-8z" fill="#fff" stroke="#333" stroke-width="1.2"/><path d="M6.2 4.7h5.4l2.8 2.8v7.3h-8.2z" fill="#fff" stroke="#333" stroke-width="1.2"/><path d="M11.4 4.9v2.8h2.8" fill="none" stroke="#333" stroke-width="1"/></svg>
<svg style="left:488px;top:489px;" width="16" height="16" viewBox="0 0 16 16"><rect x="2" y="3" width="9" height="11.4" fill="#e4e4e4" stroke="#9a9a9a" stroke-width="1.2"/><rect x="4.6" y="1.4" width="3.8" height="3" fill="#e4e4e4" stroke="#9a9a9a" stroke-width="1.1"/><rect x="6.8" y="7.4" width="7" height="7.4" fill="#e8e8e8" stroke="#9a9a9a" stroke-width="1.2"/></svg>
<svg style="left:511px;top:489px;" width="16" height="16" viewBox="0 0 16 16"><rect x="1" y="1.6" width="3.6" height="3.4" fill="#9a9a9a"/><rect x="1" y="11" width="3.6" height="3.4" fill="#9a9a9a"/><path d="M6 8h6.4M6 8l2.8-2.6M6 8l2.8 2.6" stroke="#9a9a9a" stroke-width="1.4" fill="none"/><path d="M15.4 6.2h-2.4v3.6h2.4" stroke="#9a9a9a" stroke-width="1.1" fill="none"/></svg>
<svg style="left:534px;top:489px;" width="16" height="16" viewBox="0 0 16 16"><path d="M1 1.800q1.400-.800 2.800.200 4.200 3.600 9.800 11.600l-1.300.900q-4.600-6.600-8.500-9.800-1.600-.900-2.800-2.900z" fill="#a83040"/><path d="M15.400.400q-3.400 1.400-7 4.600-5 4.400-7.400 8.800-.600 2 1.200 2.200 1.600-.200 2.400-1.800 2-3.600 4.800-6.800 3-3.800 6-7z" fill="#cc2810"/></svg>
<div style="left:557px;top:488px;width:1px;height:18px;background:#bdbdbd;"></div>
<div style="left:558px;top:488px;width:1px;height:18px;background:#f8f8f8;"></div>
<svg style="left:563px;top:489px;" width="16" height="16" viewBox="0 0 16 16"><path d="M4 5.2h4.6q4.2.2 4.2 3.6 0 2.6-4.4 5.8" fill="none" stroke="#0f5aa8" stroke-width="2.3"/><path d="M1 5.2l5-4.4v8.4z" fill="#0f5aa8"/></svg>
<svg style="left:586px;top:489px;" width="16" height="16" viewBox="0 0 16 16"><path d="M12 5.2h-4.6q-4.2.2-4.2 3.6 0 2.6 4.4 5.8" fill="none" stroke="#9a9a9a" stroke-width="2.3"/><path d="M15 5.2l-5-4.4v8.4z" fill="#9a9a9a"/></svg>
<div style="left:609px;top:488px;width:1px;height:18px;background:#bdbdbd;"></div>
<div style="left:610px;top:488px;width:1px;height:18px;background:#f8f8f8;"></div>
<svg style="left:615px;top:489px;" width="16" height="16" viewBox="0 0 16 16"><path d="M5.2 1.4h6l3.2 3.2v10h-7" fill="#fff" stroke="#333" stroke-width="1.2"/><path d="M11 1.6v3.2h3.2" fill="none" stroke="#333" stroke-width="1"/><path d="M5.2 1.4v5" stroke="#333" stroke-width="1.2"/><circle cx="6.4" cy="9.6" r="2.9" fill="#e8f2fa" stroke="#155f9c" stroke-width="1.5"/><path d="M4.2 11.8l-3 3" stroke="#155f9c" stroke-width="1.9"/></svg>
<svg style="left:638px;top:489px;" width="16" height="16" viewBox="0 0 16 16"><rect x="10.4" y="1" width="4.4" height="4.6" fill="#f4f4f4" stroke="#333" stroke-width="1.1"/><rect x="1.4" y="9" width="6.8" height="5.8" fill="#333"/><path d="M6.4 10.8h-2.6v2.2h2.6" fill="none" stroke="#fff" stroke-width="1"/><path d="M3.6 7.6v-2.4q0-1.8 2-1.8h2.8" fill="none" stroke="#333" stroke-width="1.3"/><path d="M1.6 5.4l2 2.6 2-2.6z" fill="#155f9c"/></svg>
<svg style="left:669px;top:489.5px;" width="16" height="16" viewBox="0 0 16 16"><rect x="4" y="4" width="8.4" height="8.4" fill="#a83c08"/></svg>
<span style="left:688.4px;top:489.64px;font-size:12px;line-height:13.40px;color:#000;letter-spacing:-0.021px;">Simulator</span>
<div style="left:750px;top:484px;width:11px;height:24px;background:#ececec;"></div>
<div style="left:752px;top:499px;width:7px;height:1px;background:#222;"></div>
<div style="left:752px;top:501px;border:3.5px solid transparent;border-top:4px solid #111;width:0;height:0"></div>
<div style="left:171px;top:508px;width:177px;height:265.5px;background:#dcdcdc;"></div>
<div style="left:348px;top:508px;width:10px;height:264px;background:#e6e6e6;"></div>
<div style="left:356px;top:527px;width:2px;height:215px;background:#808080;"></div>
<div style="left:358px;top:508px;width:403px;height:264px;background:#f0f0f0;"></div>
<div style="left:326px;top:510px;width:20px;height:18px;border:1px solid #444;background:#dcdcdc"></div>
<span style="left:332px;top:513.14px;font-size:12px;line-height:13.40px;color:#222;">&lt;</span>
<div style="left:171px;top:508px;width:177px;height:265.500px;overflow:hidden">
<div style="left:11px;top:10px;width:1px;height:240px;background:repeating-linear-gradient(180deg,#808080 0 1px,transparent 1px 2px)"></div>
<div style="left:30px;top:34px;width:1px;height:136px;background:repeating-linear-gradient(180deg,#808080 0 1px,transparent 1px 2px)"></div>
<div style="left:11px;top:10px;width:12px;height:1px;background:repeating-linear-gradient(90deg,#808080 0 1px,transparent 1px 2px)"></div>
<svg style="left:23px;top:1.5px;" width="15" height="15" viewBox="0 0 16 16"><rect x="1.300" y="1.300" width="13.400" height="13.800" fill="#fafafa" stroke="#0a0a0a" stroke-width="1.400"/><path d="M1.300 2.600h13.400" stroke="#0a0a0a" stroke-width="3.200"/><path d="M5.700 4v11M10.300 4v11" stroke="#0a0a0a" stroke-width="1.500"/><path d="M2.700 2l.9 1.400.9-1.400M7.100 2l.9 1.400.9-1.400M11.500 2l.9 1.400.9-1.400" fill="none" stroke="#fafafa" stroke-width=".9"/></svg>
<div style="left:41.5px;top:3.5px;width:22.5px;height:13px;background:#22c022;"></div>
<span style="left:43px;top:4.04px;font-size:11px;line-height:12.29px;color:#000;letter-spacing:-0.635px;">PLC</span>
<div style="left:16px;top:26px;width:7px;height:1px;background:repeating-linear-gradient(90deg,#808080 0 1px,transparent 1px 2px)"></div>
<div style="left:7px;top:22px;width:7px;height:7px;border:1px solid #919191;background:linear-gradient(135deg,#fff,#dde0ea);border-radius:1px"></div>
<div style="left:9px;top:26px;width:5px;height:1px;background:#3a3a5a;"></div>
<svg style="left:23px;top:17.5px;" width="15" height="15" viewBox="0 0 16 16"><g transform="translate(7.600 7.800)"><g fill="#0a0a0a"><rect x="-1.600" y="-7.300" width="3.200" height="3.600" transform="rotate(0)"/><rect x="-1.600" y="-7.300" width="3.200" height="3.600" transform="rotate(45)"/><rect x="-1.600" y="-7.300" width="3.200" height="3.600" transform="rotate(90)"/><rect x="-1.600" y="-7.300" width="3.200" height="3.600" transform="rotate(135)"/><rect x="-1.600" y="-7.300" width="3.200" height="3.600" transform="rotate(180)"/><rect x="-1.600" y="-7.300" width="3.200" height="3.600" transform="rotate(225)"/><rect x="-1.600" y="-7.300" width="3.200" height="3.600" transform="rotate(270)"/><rect x="-1.600" y="-7.300" width="3.200" height="3.600" transform="rotate(315)"/><circle r="5.600"/></g><circle r="2.700" fill="#f2f2f2"/><circle r="1.100" fill="#0a0a0a"/></g><path d="M7.600 7.800l3.400 1-1 3.400z" fill="#f2f2f2"/><path d="M9.600 9.600l3.600 2.200-3.600 2.200z" fill="#0a0a0a"/></svg>
<div style="left:41.5px;top:19.5px;width:46px;height:13px;background:#22c022;"></div>
<span style="left:43px;top:20.05px;font-size:11px;line-height:12.29px;color:#000;letter-spacing:-0.586px;">Programs</span>
<div style="left:30px;top:42px;width:11px;height:1px;background:repeating-linear-gradient(90deg,#808080 0 1px,transparent 1px 2px)"></div>
<svg style="left:41px;top:33.5px;" width="15" height="15" viewBox="0 0 16 16"><g transform="translate(7.600 7.800)"><g fill="#0a0a0a"><rect x="-1.600" y="-7.300" width="3.200" height="3.600" transform="rotate(0)"/><rect x="-1.600" y="-7.300" width="3.200" height="3.600" transform="rotate(45)"/><rect x="-1.600" y="-7.300" width="3.200" height="3.600" transform="rotate(90)"/><rect x="-1.600" y="-7.300" width="3.200" height="3.600" transform="rotate(135)"/><rect x="-1.600" y="-7.300" width="3.200" height="3.600" transform="rotate(180)"/><rect x="-1.600" y="-7.300" width="3.200" height="3.600" transform="rotate(225)"/><rect x="-1.600" y="-7.300" width="3.200" height="3.600" transform="rotate(270)"/><rect x="-1.600" y="-7.300" width="3.200" height="3.600" transform="rotate(315)"/><circle r="5.600"/></g><circle r="2.700" fill="#f2f2f2"/><circle r="1.100" fill="#0a0a0a"/></g><path d="M7.600 7.800l3 .4-.4 3.400z" fill="#f2f2f2"/><path d="M8.800 7.600h2.200v2.400" fill="none" stroke="#f2f2f2" stroke-width="1.200"/><path d="M9.200 8.600l6.400 3.400-6.400 3.400z" fill="#c038c8" stroke="#f2f2f2" stroke-width=".5"/></svg>
<span style="left:62px;top:36.05px;font-size:11px;line-height:12.29px;color:#000;letter-spacing:-0.177px;">[OB 0] Startup block</span>
<div style="left:30px;top:58px;width:11px;height:1px;background:repeating-linear-gradient(90deg,#808080 0 1px,transparent 1px 2px)"></div>
<svg style="left:41px;top:49.5px;" width="15" height="15" viewBox="0 0 16 16"><g transform="translate(7.600 7.800)"><g fill="#0a0a0a"><rect x="-1.600" y="-7.300" width="3.200" height="3.600" transform="rotate(0)"/><rect x="-1.600" y="-7.300" width="3.200" height="3.600" transform="rotate(45)"/><rect x="-1.600" y="-7.300" width="3.200" height="3.600" transform="rotate(90)"/><rect x="-1.600" y="-7.300" width="3.200" height="3.600" transform="rotate(135)"/><rect x="-1.600" y="-7.300" width="3.200" height="3.600" transform="rotate(180)"/><rect x="-1.600" y="-7.300" width="3.200" height="3.600" transform="rotate(225)"/><rect x="-1.600" y="-7.300" width="3.200" height="3.600" transform="rotate(270)"/><rect x="-1.600" y="-7.300" width="3.200" height="3.600" transform="rotate(315)"/><circle r="5.600"/></g><circle r="2.700" fill="#f2f2f2"/><circle r="1.100" fill="#0a0a0a"/></g><path d="M7.600 7.800l3 .4-.4 3.400z" fill="#f2f2f2"/><path d="M8.800 7.600h2.200v2.400" fill="none" stroke="#f2f2f2" stroke-width="1.200"/><path d="M9.200 8.600l6.400 3.400-6.400 3.400z" fill="#c038c8" stroke="#f2f2f2" stroke-width=".5"/></svg>
<span style="left:62px;top:52.05px;font-size:11px;line-height:12.29px;color:#000;letter-spacing:-0.167px;">[OB 1] Shutdown block</span>
<div style="left:30px;top:74px;width:11px;height:1px;background:repeating-linear-gradient(90deg,#808080 0 1px,transparent 1px 2px)"></div>
<svg style="left:41px;top:65.5px;" width="15" height="15" viewBox="0 0 16 16"><g transform="translate(7.600 7.800)"><g fill="#0a0a0a"><rect x="-1.600" y="-7.300" width="3.200" height="3.600" transform="rotate(0)"/><rect x="-1.600" y="-7.300" width="3.200" height="3.600" transform="rotate(45)"/><rect x="-1.600" y="-7.300" width="3.200" height="3.600" transform="rotate(90)"/><rect x="-1.600" y="-7.300" width="3.200" height="3.600" transform="rotate(135)"/><rect x="-1.600" y="-7.300" width="3.200" height="3.600" transform="rotate(180)"/><rect x="-1.600" y="-7.300" width="3.200" height="3.600" transform="rotate(225)"/><rect x="-1.600" y="-7.300" width="3.200" height="3.600" transform="rotate(270)"/><rect x="-1.600" y="-7.300" width="3.200" height="3.600" transform="rotate(315)"/><circle r="5.600"/></g><circle r="2.700" fill="#f2f2f2"/><circle r="1.100" fill="#0a0a0a"/></g><path d="M7.600 7.800l3 .4-.4 3.400z" fill="#f2f2f2"/><path d="M8.800 7.600h2.200v2.400" fill="none" stroke="#f2f2f2" stroke-width="1.200"/><path d="M9.200 8.600l6.400 3.400-6.400 3.400z" fill="#c038c8" stroke="#f2f2f2" stroke-width=".5"/></svg>
<span style="left:62px;top:68.05px;font-size:11px;line-height:12.29px;color:#000;letter-spacing:-0.197px;">[OB 2] Interrupts block</span>
<div style="left:30px;top:90px;width:11px;height:1px;background:repeating-linear-gradient(90deg,#808080 0 1px,transparent 1px 2px)"></div>
<svg style="left:41px;top:81.5px;" width="15" height="15" viewBox="0 0 16 16"><g transform="translate(7.600 7.800)"><g fill="#0a0a0a"><rect x="-1.600" y="-7.300" width="3.200" height="3.600" transform="rotate(0)"/><rect x="-1.600" y="-7.300" width="3.200" height="3.600" transform="rotate(45)"/><rect x="-1.600" y="-7.300" width="3.200" height="3.600" transform="rotate(90)"/><rect x="-1.600" y="-7.300" width="3.200" height="3.600" transform="rotate(135)"/><rect x="-1.600" y="-7.300" width="3.200" height="3.600" transform="rotate(180)"/><rect x="-1.600" y="-7.300" width="3.200" height="3.600" transform="rotate(225)"/><rect x="-1.600" y="-7.300" width="3.200" height="3.600" transform="rotate(270)"/><rect x="-1.600" y="-7.300" width="3.200" height="3.600" transform="rotate(315)"/><circle r="5.600"/></g><circle r="2.700" fill="#f2f2f2"/><circle r="1.100" fill="#0a0a0a"/></g><path d="M7.600 7.800l3 .4-.4 3.400z" fill="#f2f2f2"/><path d="M8.800 7.600h2.200v2.400" fill="none" stroke="#f2f2f2" stroke-width="1.200"/><path d="M9.200 8.600l6.400 3.400-6.400 3.400z" fill="#c038c8" stroke="#f2f2f2" stroke-width=".5"/></svg>
<div style="left:60.5px;top:83.5px;width:87.4px;height:13px;background:#3a78b8;"></div>
<span style="left:62px;top:84.05px;font-size:11px;line-height:12.29px;color:#fff;letter-spacing:-0.143px;">[OB 3] Main block</span>
<div style="left:35px;top:106px;width:6px;height:1px;background:repeating-linear-gradient(90deg,#808080 0 1px,transparent 1px 2px)"></div>
<div style="left:26px;top:102px;width:7px;height:7px;border:1px solid #919191;background:linear-gradient(135deg,#fff,#dde0ea);border-radius:1px"></div>
<div style="left:28px;top:106px;width:5px;height:1px;background:#3a3a5a;"></div>
<svg style="left:41px;top:97.5px;" width="15" height="15" viewBox="0 0 16 16"><g transform="translate(7.600 7.800)"><g fill="#0a0a0a"><rect x="-1.600" y="-7.300" width="3.200" height="3.600" transform="rotate(0)"/><rect x="-1.600" y="-7.300" width="3.200" height="3.600" transform="rotate(45)"/><rect x="-1.600" y="-7.300" width="3.200" height="3.600" transform="rotate(90)"/><rect x="-1.600" y="-7.300" width="3.200" height="3.600" transform="rotate(135)"/><rect x="-1.600" y="-7.300" width="3.200" height="3.600" transform="rotate(180)"/><rect x="-1.600" y="-7.300" width="3.200" height="3.600" transform="rotate(225)"/><rect x="-1.600" y="-7.300" width="3.200" height="3.600" transform="rotate(270)"/><rect x="-1.600" y="-7.300" width="3.200" height="3.600" transform="rotate(315)"/><circle r="5.600"/></g><circle r="2.700" fill="#f2f2f2"/><circle r="1.100" fill="#0a0a0a"/></g><path d="M7.600 7.800l3 .4-.4 3.400z" fill="#f2f2f2"/><path d="M8.800 7.600h2.200v2.400" fill="none" stroke="#f2f2f2" stroke-width="1.200"/><path d="M9.200 8.600l6.400 3.400-6.400 3.400z" fill="#2f8fe0" stroke="#f2f2f2" stroke-width=".5"/></svg>
<span style="left:62px;top:100.05px;font-size:11px;line-height:12.29px;color:#000;letter-spacing:-0.316px;">Program blocks</span>
<div style="left:49px;top:122px;width:11px;height:1px;background:repeating-linear-gradient(90deg,#808080 0 1px,transparent 1px 2px)"></div>
<svg style="left:60px;top:113.5px;" width="15" height="15" viewBox="0 0 16 16"><g transform="translate(9.600 10)"><g fill="#111"><rect x="-1.100" y="-5.600" width="2.200" height="3" transform="rotate(0)"/><rect x="-1.100" y="-5.600" width="2.200" height="3" transform="rotate(45)"/><rect x="-1.100" y="-5.600" width="2.200" height="3" transform="rotate(90)"/><rect x="-1.100" y="-5.600" width="2.200" height="3" transform="rotate(135)"/><rect x="-1.100" y="-5.600" width="2.200" height="3" transform="rotate(180)"/><rect x="-1.100" y="-5.600" width="2.200" height="3" transform="rotate(225)"/><rect x="-1.100" y="-5.600" width="2.200" height="3" transform="rotate(270)"/><rect x="-1.100" y="-5.600" width="2.200" height="3" transform="rotate(315)"/><circle r="3.800"/></g><circle r="1.900" fill="#f0f0f0"/><circle r=".8" fill="#111"/></g><path d="M3.400 .4v6M.4 3.400h6" stroke="#2f8fe0" stroke-width="2"/></svg>
<span style="left:81px;top:116.05px;font-size:11px;line-height:12.29px;color:#000;letter-spacing:-0.165px;">Add new block</span>
<div style="left:35px;top:138px;width:6px;height:1px;background:repeating-linear-gradient(90deg,#808080 0 1px,transparent 1px 2px)"></div>
<div style="left:26px;top:134px;width:7px;height:7px;border:1px solid #919191;background:linear-gradient(135deg,#fff,#dde0ea);border-radius:1px"></div>
<div style="left:28px;top:138px;width:5px;height:1px;background:#3a3a5a;"></div>
<svg style="left:41px;top:129.5px;" width="15" height="15" viewBox="0 0 16 16"><g transform="translate(7.600 7.800)"><g fill="#0a0a0a"><rect x="-1.600" y="-7.300" width="3.200" height="3.600" transform="rotate(0)"/><rect x="-1.600" y="-7.300" width="3.200" height="3.600" transform="rotate(45)"/><rect x="-1.600" y="-7.300" width="3.200" height="3.600" transform="rotate(90)"/><rect x="-1.600" y="-7.300" width="3.200" height="3.600" transform="rotate(135)"/><rect x="-1.600" y="-7.300" width="3.200" height="3.600" transform="rotate(180)"/><rect x="-1.600" y="-7.300" width="3.200" height="3.600" transform="rotate(225)"/><rect x="-1.600" y="-7.300" width="3.200" height="3.600" transform="rotate(270)"/><rect x="-1.600" y="-7.300" width="3.200" height="3.600" transform="rotate(315)"/><circle r="5.600"/></g><circle r="2.700" fill="#f2f2f2"/><circle r="1.100" fill="#0a0a0a"/></g><path d="M7.600 7.800l3 .4-.4 3.400z" fill="#f2f2f2"/><path d="M8.800 7.600h2.200v2.400" fill="none" stroke="#f2f2f2" stroke-width="1.200"/><path d="M9.200 8.600l6.400 3.400-6.400 3.400z" fill="#2a9a3a" stroke="#f2f2f2" stroke-width=".5"/></svg>
<span style="left:62px;top:132.04px;font-size:11px;line-height:12.29px;color:#000;letter-spacing:-0.149px;">Function blocks</span>
<div style="left:49px;top:154px;width:11px;height:1px;background:repeating-linear-gradient(90deg,#808080 0 1px,transparent 1px 2px)"></div>
<svg style="left:60px;top:145.5px;" width="15" height="15" viewBox="0 0 16 16"><g transform="translate(9.600 10)"><g fill="#111"><rect x="-1.100" y="-5.600" width="2.200" height="3" transform="rotate(0)"/><rect x="-1.100" y="-5.600" width="2.200" height="3" transform="rotate(45)"/><rect x="-1.100" y="-5.600" width="2.200" height="3" transform="rotate(90)"/><rect x="-1.100" y="-5.600" width="2.200" height="3" transform="rotate(135)"/><rect x="-1.100" y="-5.600" width="2.200" height="3" transform="rotate(180)"/><rect x="-1.100" y="-5.600" width="2.200" height="3" transform="rotate(225)"/><rect x="-1.100" y="-5.600" width="2.200" height="3" transform="rotate(270)"/><rect x="-1.100" y="-5.600" width="2.200" height="3" transform="rotate(315)"/><circle r="3.800"/></g><circle r="1.900" fill="#f0f0f0"/><circle r=".8" fill="#111"/></g><path d="M3.400 .4v6M.4 3.400h6" stroke="#2a9a3a" stroke-width="2"/></svg>
<span style="left:81px;top:148.04px;font-size:11px;line-height:12.29px;color:#000;letter-spacing:-0.165px;">Add new block</span>
<div style="left:35px;top:170px;width:6px;height:1px;background:repeating-linear-gradient(90deg,#808080 0 1px,transparent 1px 2px)"></div>
<div style="left:26px;top:166px;width:7px;height:7px;border:1px solid #919191;background:linear-gradient(135deg,#fff,#dde0ea);border-radius:1px"></div>
<div style="left:28px;top:170px;width:5px;height:1px;background:#3a3a5a;"></div>
<svg style="left:41px;top:161.5px;" width="15" height="15" viewBox="0 0 16 16"><rect x="1.200" y="2" width="13.600" height="12.400" fill="#fafafa" stroke="#111" stroke-width="1.400"/><path d="M1.200 3.200h13.600" stroke="#111" stroke-width="2.600"/><path d="M1.200 7.600h13.600M1.200 11h13.600M5.800 4v10.400M10.200 4v10.400" stroke="#111" stroke-width="1.200"/></svg>
<span style="left:62px;top:164.04px;font-size:11px;line-height:12.29px;color:#000;letter-spacing:-0.117px;">Data blocks</span>
<div style="left:49px;top:186px;width:11px;height:1px;background:repeating-linear-gradient(90deg,#808080 0 1px,transparent 1px 2px)"></div>
<svg style="left:60px;top:177.5px;" width="15" height="15" viewBox="0 0 16 16"><rect x="1.200" y="2" width="13.600" height="12.400" fill="#fafafa" stroke="#111" stroke-width="1.400"/><path d="M1.200 3.200h13.600" stroke="#111" stroke-width="2.600"/><path d="M1.200 7.600h13.600M1.200 11h13.600M5.800 4v10.400M10.200 4v10.400" stroke="#111" stroke-width="1.200"/></svg>
<span style="left:81px;top:180.04px;font-size:11px;line-height:12.29px;color:#000;letter-spacing:-0.290px;">[DB 0] System DB</span>
<div style="left:49px;top:202px;width:11px;height:1px;background:repeating-linear-gradient(90deg,#808080 0 1px,transparent 1px 2px)"></div>
<svg style="left:60px;top:193.5px;" width="15" height="15" viewBox="0 0 16 16"><rect x="3.200" y="4" width="12" height="11" fill="#fafafa" stroke="#111" stroke-width="1.300"/><path d="M3.200 5.200h12" stroke="#111" stroke-width="2.400"/><path d="M3.200 8.800h12M3.200 11.800h12M7.200 6v9M11.200 6v9" stroke="#111" stroke-width="1.100"/><path d="M3.200 .2v6.200M.1 3.300h6.200" stroke="#2a9a3a" stroke-width="2"/></svg>
<span style="left:81px;top:196.04px;font-size:11px;line-height:12.29px;color:#000;letter-spacing:-0.165px;">Add new block</span>
<div style="left:11px;top:218px;width:12px;height:1px;background:repeating-linear-gradient(90deg,#808080 0 1px,transparent 1px 2px)"></div>
<svg style="left:23px;top:209.5px;" width="15" height="15" viewBox="0 0 16 16"><text x="8" y="13" font-family="Liberation Serif" font-weight="bold" font-size="15" text-anchor="middle" fill="#111">T</text><path d="M3.200 4.800l-2.600 3 2.600 3M12.800 4.800l2.600 3-2.600 3" fill="none" stroke="#111" stroke-width="1.400"/></svg>
<div style="left:41.5px;top:211.5px;width:26.2px;height:13px;background:#22c022;"></div>
<span style="left:43px;top:212.04px;font-size:11px;line-height:12.29px;color:#000;letter-spacing:-0.013px;">Tags</span>
<div style="left:11px;top:234px;width:12px;height:1px;background:repeating-linear-gradient(90deg,#808080 0 1px,transparent 1px 2px)"></div>
<svg style="left:23px;top:225.5px;" width="15" height="15" viewBox="0 0 16 16"><rect x="1.200" y="2" width="6.400" height="4.800" fill="#f4f4f4" stroke="#111" stroke-width="1.300"/><rect x="10" y="1.200" width="5" height="4" fill="#f4f4f4" stroke="#111" stroke-width="1.300"/><rect x="10" y="10.400" width="5" height="4.400" fill="#f4f4f4" stroke="#111" stroke-width="1.300"/><path d="M4.400 6.800v6h5.600M4.400 9h3.800v-5.600h1.800" fill="none" stroke="#111" stroke-width="1.300"/></svg>
<span style="left:43px;top:228.04px;font-size:11px;line-height:12.29px;color:#000;letter-spacing:-0.207px;">Reference</span>
<div style="left:16px;top:250px;width:7px;height:1px;background:repeating-linear-gradient(90deg,#808080 0 1px,transparent 1px 2px)"></div>
<div style="left:7px;top:246px;width:7px;height:7px;border:1px solid #919191;background:linear-gradient(135deg,#fff,#dde0ea);border-radius:1px"></div>
<div style="left:9px;top:250px;width:5px;height:1px;background:#3a3a5a;"></div>
<svg style="left:23px;top:241.5px;" width="15" height="15" viewBox="0 0 16 16"><circle cx="4.200" cy="10.600" r="2.900" fill="none" stroke="#111" stroke-width="1.500"/><circle cx="11.800" cy="10.600" r="2.900" fill="none" stroke="#111" stroke-width="1.500"/><path d="M7 10q1-1 2 0M1.600 9l2.800-5.400M14.400 9l-2.800-5.400M3.600 4.200h8.800" fill="none" stroke="#111" stroke-width="1.300"/></svg>
<span style="left:43px;top:244.04px;font-size:11px;line-height:12.29px;color:#000;letter-spacing:-0.105px;">Watch and force tables</span>
<div style="left:30px;top:266px;width:11px;height:1px;background:repeating-linear-gradient(90deg,#808080 0 1px,transparent 1px 2px)"></div>
<svg style="left:41px;top:257.5px;" width="15" height="15" viewBox="0 0 16 16"><path d="M3.400 .4v6M.4 3.400h6" stroke="#2a9a3a" stroke-width="2"/><path d="M7 5l5 4-5 4z" fill="#111"/></svg>
<span style="left:62px;top:260.05px;font-size:11px;line-height:12.29px;color:#000;letter-spacing:-0.188px;">Add new table</span>
<div style="left:49px;top:114px;width:1px;height:9px;background:repeating-linear-gradient(180deg,#808080 0 1px,transparent 1px 2px)"></div>
<div style="left:49px;top:146px;width:1px;height:9px;background:repeating-linear-gradient(180deg,#808080 0 1px,transparent 1px 2px)"></div>
<div style="left:49px;top:178px;width:1px;height:25px;background:repeating-linear-gradient(180deg,#808080 0 1px,transparent 1px 2px)"></div>
<div style="left:30px;top:258px;width:1px;height:9px;background:repeating-linear-gradient(180deg,#808080 0 1px,transparent 1px 2px)"></div>
</div>
<div style="left:171px;top:773.5px;width:590px;height:29.5px;background:#f0f0f0;"></div>
<div style="left:172px;top:773.500px;width:128px;height:22px;background:#f6f6f6;border-left:1px solid #6a6a6a;border-top:1.500px solid #707070;border-right:1px solid #fff;border-bottom:1px solid #fff"></div>
<svg style="left:183px;top:781px;" width="14" height="14" viewBox="0 0 16 16"><g transform="translate(7.600 7.800)"><g fill="#0a0a0a"><rect x="-1.600" y="-7.300" width="3.200" height="3.600" transform="rotate(0)"/><rect x="-1.600" y="-7.300" width="3.200" height="3.600" transform="rotate(45)"/><rect x="-1.600" y="-7.300" width="3.200" height="3.600" transform="rotate(90)"/><rect x="-1.600" y="-7.300" width="3.200" height="3.600" transform="rotate(135)"/><rect x="-1.600" y="-7.300" width="3.200" height="3.600" transform="rotate(180)"/><rect x="-1.600" y="-7.300" width="3.200" height="3.600" transform="rotate(225)"/><rect x="-1.600" y="-7.300" width="3.200" height="3.600" transform="rotate(270)"/><rect x="-1.600" y="-7.300" width="3.200" height="3.600" transform="rotate(315)"/><circle r="5.600"/></g><circle r="2.700" fill="#f2f2f2"/><circle r="1.100" fill="#0a0a0a"/></g><path d="M7.600 7.800l3 .4-.4 3.400z" fill="#f2f2f2"/><path d="M8.800 7.600h2.200v2.400" fill="none" stroke="#f2f2f2" stroke-width="1.200"/><path d="M9.200 8.600l6.400 3.400-6.400 3.400z" fill="#c038c8" stroke="#f2f2f2" stroke-width=".5"/></svg>
<span style="left:208.5px;top:783.04px;font-size:11px;line-height:12.29px;color:#000;letter-spacing:-0.166px;">[OB 3] Main block</span>
<div style="left:368px;top:510px;width:391px;height:260px;background:#696969;"></div>
<svg style="left:378px;top:518px;" width="15" height="15" viewBox="0 0 16 16"><g transform="translate(7.600 7.800)"><g fill="#0a0a0a"><rect x="-1.600" y="-7.300" width="3.200" height="3.600" transform="rotate(0)"/><rect x="-1.600" y="-7.300" width="3.200" height="3.600" transform="rotate(45)"/><rect x="-1.600" y="-7.300" width="3.200" height="3.600" transform="rotate(90)"/><rect x="-1.600" y="-7.300" width="3.200" height="3.600" transform="rotate(135)"/><rect x="-1.600" y="-7.300" width="3.200" height="3.600" transform="rotate(180)"/><rect x="-1.600" y="-7.300" width="3.200" height="3.600" transform="rotate(225)"/><rect x="-1.600" y="-7.300" width="3.200" height="3.600" transform="rotate(270)"/><rect x="-1.600" y="-7.300" width="3.200" height="3.600" transform="rotate(315)"/><circle r="5.600"/></g><circle r="2.700" fill="#f2f2f2"/><circle r="1.100" fill="#0a0a0a"/></g><path d="M7.600 7.800l3 .4-.4 3.400z" fill="#f2f2f2"/><path d="M8.800 7.600h2.200v2.400" fill="none" stroke="#f2f2f2" stroke-width="1.200"/><path d="M9.200 8.600l6.400 3.400-6.400 3.400z" fill="#c038c8" stroke="#f2f2f2" stroke-width=".5"/></svg>
<span style="left:400.8px;top:516.52px;font-size:16px;line-height:17.87px;color:#fff;letter-spacing:-0.046px;">[OB 3] Main block //PLC alwa...</span>
<div style="left:633px;top:514px;width:27px;height:20px;border:2px solid #a6a6a6;background:#696969"></div>
<svg style="left:642px;top:519px;" width="14" height="14" viewBox="0 0 16 16"><circle cx="4.200" cy="10.600" r="2.900" fill="none" stroke="#111" stroke-width="1.500"/><circle cx="11.800" cy="10.600" r="2.900" fill="none" stroke="#111" stroke-width="1.500"/><path d="M7 10q1-1 2 0M1.600 9l2.800-5.400M14.400 9l-2.800-5.400M3.600 4.200h8.800" fill="none" stroke="#111" stroke-width="1.300"/></svg>
<div style="left:643px;top:520px;width:3px;height:4px;background:#1fa060;"></div>
<div style="left:674px;top:528px;width:13px;height:3px;background:#fff;"></div>
<div style="left:708px;top:519px;width:6px;height:5px;border:2px solid #fff;border-top-width:3px"></div>
<div style="left:704px;top:525px;width:6px;height:5px;border:2px solid #fff;border-top-width:3px;background:#696969"></div>
<span style="left:733px;top:516.62px;font-size:17px;line-height:18.99px;color:#fff;font-weight:bold;-webkit-text-stroke:.5px #fff;">X</span>
<div style="left:373px;top:538px;width:382px;height:23px;background:#dfdfdf;"></div>
<div style="left:373px;top:561px;width:382px;height:1px;background:#777;"></div>
<div style="left:381px;top:543px;width:10px;height:10px;border:1px solid #444;background:#f4f4f4"></div>
<div style="left:379px;top:544.5px;width:10px;height:10px;border:1px solid #333;background:#eaf4fc"></div>
<div style="left:381px;top:549.5px;width:8px;height:2px;background:#0f4f98;"></div>
<div style="left:384px;top:546.5px;width:2px;height:8px;background:#0f4f98;"></div>
<div style="left:404px;top:543px;width:10px;height:10px;border:1px solid #444;background:#f4f4f4"></div>
<div style="left:402px;top:544.5px;width:10px;height:10px;border:1px solid #333;background:#fcf4ea"></div>
<div style="left:404px;top:549.5px;width:8px;height:2px;background:#0f4f98;"></div>
<div style="left:425px;top:542px;width:1px;height:16px;background:#bdbdbd;"></div>
<div style="left:426px;top:542px;width:1px;height:16px;background:#f8f8f8;"></div>
<svg style="left:430px;top:542px;" width="16" height="16" viewBox="0 0 16 16"><path d="M1 1.500v7h13M9 3l5.500 5.500-5.500 5.500" fill="none" stroke="#444" stroke-width="1.800"/></svg>
<svg style="left:453px;top:542px;" width="16" height="16" viewBox="0 0 16 16"><path d="M1 14.500h7v-13M2.500 7l5.500-5.500 5.500 5.500" fill="none" stroke="#444" stroke-width="1.800"/></svg>
<div style="left:476px;top:542px;width:1px;height:16px;background:#bdbdbd;"></div>
<div style="left:477px;top:542px;width:1px;height:16px;background:#f8f8f8;"></div>
<svg style="left:482px;top:542px;" width="17" height="16" viewBox="0 0 17 16"><path d="M0 8h6M11 8h6" stroke="#444" stroke-width="1.800"/><path d="M6.500 3v10M10.500 3v10" stroke="#444" stroke-width="2"/></svg>
<svg style="left:505px;top:542px;" width="17" height="16" viewBox="0 0 17 16"><path d="M0 8h6M11 8h6" stroke="#444" stroke-width="1.800"/><path d="M6.500 3v10M10.500 3v10" stroke="#444" stroke-width="2"/><path d="M5.500 12.500l6-9" stroke="#444" stroke-width="1.600"/></svg>
<span style="left:528px;top:541.02px;font-size:16px;line-height:17.87px;color:#444;font-weight:bold;letter-spacing:1.773px;">{}</span>
<div style="left:373px;top:562px;width:338px;height:43px;background:#fff;"></div>
<div style="left:412px;top:584px;width:299px;height:21px;background:#dcdcdc;"></div>
<div style="left:373px;top:583px;width:338px;height:1px;background:#a0a0a0;"></div>
<div style="left:373px;top:604px;width:338px;height:1px;background:#777;"></div>
<div style="left:412px;top:562px;width:1px;height:43px;background:#a0a0a0;"></div>
<div style="left:612px;top:562px;width:1px;height:43px;background:#a0a0a0;"></div>
<div style="left:692px;top:562px;width:1px;height:43px;background:#a0a0a0;"></div>
<div style="left:710px;top:562px;width:1px;height:43px;background:#a0a0a0;"></div>
<span style="left:420.5px;top:567.04px;font-size:11px;line-height:12.29px;color:#000;letter-spacing:-0.586px;">Name</span>
<span style="left:621px;top:567.04px;font-size:11px;line-height:12.29px;color:#000;letter-spacing:0.035px;">Type</span>
<span style="left:699px;top:567.04px;font-size:11px;line-height:12.29px;color:#000;letter-spacing:-1.227px;clip-path:inset(0 2px 0 0);">Cc</span>
<span style="left:416.5px;top:589.04px;font-size:11px;line-height:12.29px;color:#000;letter-spacing:-0.158px;">Main block</span>
<span style="left:617.5px;top:589.04px;font-size:11px;line-height:12.29px;color:#000;letter-spacing:-0.531px;">LD</span>
<span style="left:696.5px;top:589.04px;font-size:11px;line-height:12.29px;color:#000;letter-spacing:-0.344px;">P..</span>
<div style="left:379px;top:590px;border:5px solid transparent;border-left:6px solid #333;width:0;height:0"></div>
<div style="left:711px;top:562px;width:17px;height:205px;background:#ececec;"></div>
<div style="left:719px;top:579px;width:2px;height:125px;background:#808080;"></div>
<div style="left:728px;top:562px;width:1px;height:205px;background:#777;"></div>
<div style="left:729px;top:562px;width:5px;height:205px;background:#e8e8e8;"></div>
<div style="left:734px;top:562px;width:21px;height:20px;background:#dcdcdc;"></div>
<div style="left:734px;top:562px;width:21px;height:1px;background:#fff;"></div>
<span style="left:740px;top:566.14px;font-size:12px;line-height:13.40px;color:#222;">&lt;</span>
<div style="left:734px;top:582px;width:21px;height:185px;background:#696969;"></div>
<span style="left:735px;top:748px;font-size:20px;line-height:20px;color:#fff;transform-origin:0 0;transform:rotate(-90deg);letter-spacing:-0.877px">FULMATIC SOFT</span>
<div style="left:373px;top:624px;width:338px;height:143px;background:#f4f4f4;"></div>
<div style="left:373px;top:605px;width:337px;height:18px;background:#dcdcdc;border:1px solid #777"></div>
<div style="left:390px;top:605px;width:1px;height:20px;background:#777;"></div>
<div style="left:465px;top:605px;width:1px;height:20px;background:#777;"></div>
<svg style="left:377px;top:611px;" width="10" height="8" viewBox="0 0 10 8"><path d="M1.500 7l3-5.500 3 5.500" fill="none" stroke="#222" stroke-width="1.100"/></svg>
<span style="left:403.5px;top:609.04px;font-size:11px;line-height:12.29px;color:#000;letter-spacing:-0.115px;">Network 0</span>
<div style="left:373px;top:737px;width:337px;height:18px;background:#dcdcdc;border:1px solid #777"></div>
<div style="left:390px;top:737px;width:1px;height:20px;background:#777;"></div>
<div style="left:465px;top:737px;width:1px;height:20px;background:#777;"></div>
<svg style="left:377px;top:743px;" width="10" height="8" viewBox="0 0 10 8"><path d="M1.500 7l3-5.500 3 5.500" fill="none" stroke="#222" stroke-width="1.100"/></svg>
<span style="left:403.5px;top:741.04px;font-size:11px;line-height:12.29px;color:#000;letter-spacing:-0.115px;">Network 1</span>
<div style="left:375px;top:624px;width:2.5px;height:113px;background:#34b434;"></div>
<div style="left:375px;top:757px;width:2px;height:10px;background:#b0b0b0;"></div>
<div style="left:377px;top:675px;width:37px;height:2.5px;background:#34b434;"></div>
<div style="left:413.5px;top:666px;width:2.5px;height:20px;background:#34b434;"></div>
<div style="left:454px;top:666px;width:2.5px;height:20px;background:#34b434;"></div>
<div style="left:456px;top:675px;width:82px;height:2.5px;background:#34b434;"></div>
<div style="left:572px;top:675px;width:28px;height:2.5px;background:#34b434;"></div>
<svg style="left:536px;top:665px;" width="40" height="22" viewBox="0 0 40 22"><path d="M6.500 1q-4.500 10 0 20M32 1q4.500 10 0 20" fill="none" stroke="#34b434" stroke-width="2.300"/></svg>
<div style="left:600px;top:673px;width:10px;height:3px;border:2px solid #3a8fc0;background:#cfe8f8"></div>
<div style="left:425.875px;top:625.5px;width:18.25px;height:13px;background:#dcdcdc;"></div>
<span style="left:428.875px;top:625.54px;font-size:11px;line-height:12.29px;color:#222;">50</span>
<span style="left:420.6328125px;top:638.54px;font-size:11px;line-height:12.29px;color:#222;">MW 0</span>
<span style="left:420.0078125px;top:652.04px;font-size:11px;line-height:12.29px;color:#2e8b2e;">Tag_1</span>
<svg style="left:429px;top:667px;" width="12" height="11" viewBox="0 0 12 11"><path d="M10.500 1l-9 4.500 9 4.500" fill="none" stroke="#2e9a2e" stroke-width="1.200"/></svg>
<span style="left:423.1640625px;top:675.04px;font-size:11px;line-height:12.29px;color:#3c9a3c;font-style:italic;text-decoration:underline;">UINT</span>
<span style="left:420.0078125px;top:689.04px;font-size:11px;line-height:12.29px;color:#2e8b2e;">Tag_2</span>
<span style="left:420.6328125px;top:702.04px;font-size:11px;line-height:12.29px;color:#222;">MW 2</span>
<div style="left:422.8203125px;top:715px;width:24.359375px;height:13px;background:#dcdcdc;"></div>
<span style="left:425.8203125px;top:715.04px;font-size:11px;line-height:12.29px;color:#222;">100</span>
<div style="left:537.0234375px;top:625.5px;width:35.953125px;height:13px;background:#dcdcdc;"></div>
<span style="left:540.0234375px;top:625.54px;font-size:11px;line-height:12.29px;color:#222;">TRUE</span>
<span style="left:541.546875px;top:638.54px;font-size:11px;line-height:12.29px;color:#222;">Q 0.0</span>
<span style="left:540.0078125px;top:652.04px;font-size:11px;line-height:12.29px;color:#2e8b2e;">Tag_3</span>
<div style="left:4px;top:809px;width:1360px;height:27px;background:#f0f0f0;"></div>
<div style="left:105px;top:809px;width:1259px;height:3px;background:#fff;"></div>
<div style="left:4px;top:809px;width:101px;height:2px;background:#ececec;"></div>
<div style="left:4px;top:811px;width:101px;height:1.5px;background:#666;"></div>
<div style="left:4px;top:812.5px;width:101px;height:23.5px;background:#f5f5f5;"></div>
<div style="left:104px;top:812.5px;width:1px;height:23.5px;background:#d4d4d4;"></div>
<svg style="left:12px;top:817px;" width="16" height="16" viewBox="0 0 16 16"><path d="M11.400 .8l3.800 1.600v11.200l-3.800 1.600-6.400-5.800-2.800 2.200-1.400-.8v-5.600l1.400-.8 2.800 2.200z" fill="#8a6fd8"/><path d="M11.400 .8l3.800 1.600v11.200l-3.800 1.600z" fill="#b58cf0"/><path d="M11.400 4.800v6.400l-4-3.200z" fill="#e8dcfa"/><path d="M.8 5.200l1.400-.8 2.800 2.200v2.800l-2.800 2.200-1.400-.8z" fill="#6a55b8"/><path d="M2.200 6.400v3.200l1.600-1.600z" fill="#dcd0f4"/></svg>
<span style="left:38px;top:820.54px;font-size:11px;line-height:12.29px;color:#000;letter-spacing:-0.195px;">[0] C# Script</span>
<div style="left:105px;top:812px;width:5px;height:24px;background:#fff;"></div>
<div style="left:110px;top:812px;width:102px;height:24px;background:#f0f0f0;"></div>
<div style="left:110px;top:812px;width:1px;height:24px;background:#fafafa;"></div>
<div style="left:210px;top:812px;width:1px;height:24px;background:#b8b8b8;"></div>
<div style="left:211px;top:811px;width:1px;height:25px;background:#666;"></div>
<svg style="left:119px;top:817px;" width="16" height="16" viewBox="0 0 16 16"><rect x="1.300" y="1.300" width="12.400" height="13" fill="#fafafa" stroke="#0a0a0a" stroke-width="1.400"/><path d="M1.300 2.600h12.400" stroke="#0a0a0a" stroke-width="3.200"/><path d="M5.400 4v10.400M9.500 4v4" stroke="#0a0a0a" stroke-width="1.400"/><path d="M2.600 2l.8 1.400.8-1.400M6.600 2l.8 1.400.8-1.400M10.600 2l.8 1.400.8-1.400" fill="none" stroke="#fafafa" stroke-width=".9"/><path d="M10.200 7.400l5.400 3.800-5.400 3.800z" fill="#1fba6a"/></svg>
<span style="left:145px;top:820.54px;font-size:11px;line-height:12.29px;color:#000;letter-spacing:-0.193px;">[0] Soft PLC</span>
<div style="left:211px;top:812px;width:5px;height:24px;background:#fff;"></div>
<div style="left:216px;top:812px;width:104px;height:24px;background:#f0f0f0;"></div>
<div style="left:216px;top:812px;width:1px;height:24px;background:#fafafa;"></div>
<div style="left:318px;top:812px;width:1px;height:24px;background:#b8b8b8;"></div>
<div style="left:319px;top:811px;width:1px;height:25px;background:#666;"></div>
<svg style="left:225px;top:817px;" width="16" height="16" viewBox="0 0 16 16"><path d="M11.400 .8l3.800 1.600v11.200l-3.800 1.600-6.400-5.800-2.800 2.200-1.400-.8v-5.600l1.400-.8 2.800 2.200z" fill="#8a6fd8"/><path d="M11.400 .8l3.800 1.600v11.200l-3.800 1.600z" fill="#b58cf0"/><path d="M11.400 4.800v6.400l-4-3.200z" fill="#e8dcfa"/><path d="M.8 5.200l1.400-.8 2.800 2.200v2.800l-2.800 2.200-1.400-.8z" fill="#6a55b8"/><path d="M2.200 6.400v3.200l1.600-1.600z" fill="#dcd0f4"/></svg>
<span style="left:251px;top:820.54px;font-size:11px;line-height:12.29px;color:#000;letter-spacing:-0.165px;">[1] VB Script</span>
<div style="left:318px;top:812px;width:5px;height:24px;background:#fff;"></div>
<div style="left:323px;top:812px;width:114px;height:24px;background:#f0f0f0;"></div>
<div style="left:323px;top:812px;width:1px;height:24px;background:#fafafa;"></div>
<div style="left:435px;top:812px;width:1px;height:24px;background:#b8b8b8;"></div>
<div style="left:436px;top:811px;width:1px;height:25px;background:#666;"></div>
<svg style="left:332px;top:817px;" width="16" height="16" viewBox="0 0 16 16"><path d="M11.400 .8l3.800 1.600v11.200l-3.800 1.600-6.400-5.800-2.800 2.200-1.400-.8v-5.600l1.400-.8 2.800 2.200z" fill="#8a6fd8"/><path d="M11.400 .8l3.800 1.600v11.200l-3.800 1.600z" fill="#b58cf0"/><path d="M11.400 4.800v6.400l-4-3.200z" fill="#e8dcfa"/><path d="M.8 5.200l1.400-.8 2.800 2.200v2.800l-2.800 2.200-1.400-.8z" fill="#6a55b8"/><path d="M2.200 6.400v3.200l1.600-1.600z" fill="#dcd0f4"/></svg>
<span style="left:358px;top:820.54px;font-size:11px;line-height:12.29px;color:#000;letter-spacing:-0.087px;">[2] VB Script 2</span>
<div style="left:437px;top:812px;width:4px;height:24px;background:#fff;"></div>
<div style="left:1px;top:835.5px;width:1365px;height:2.5px;background:#696969;"></div>
</body></html>
